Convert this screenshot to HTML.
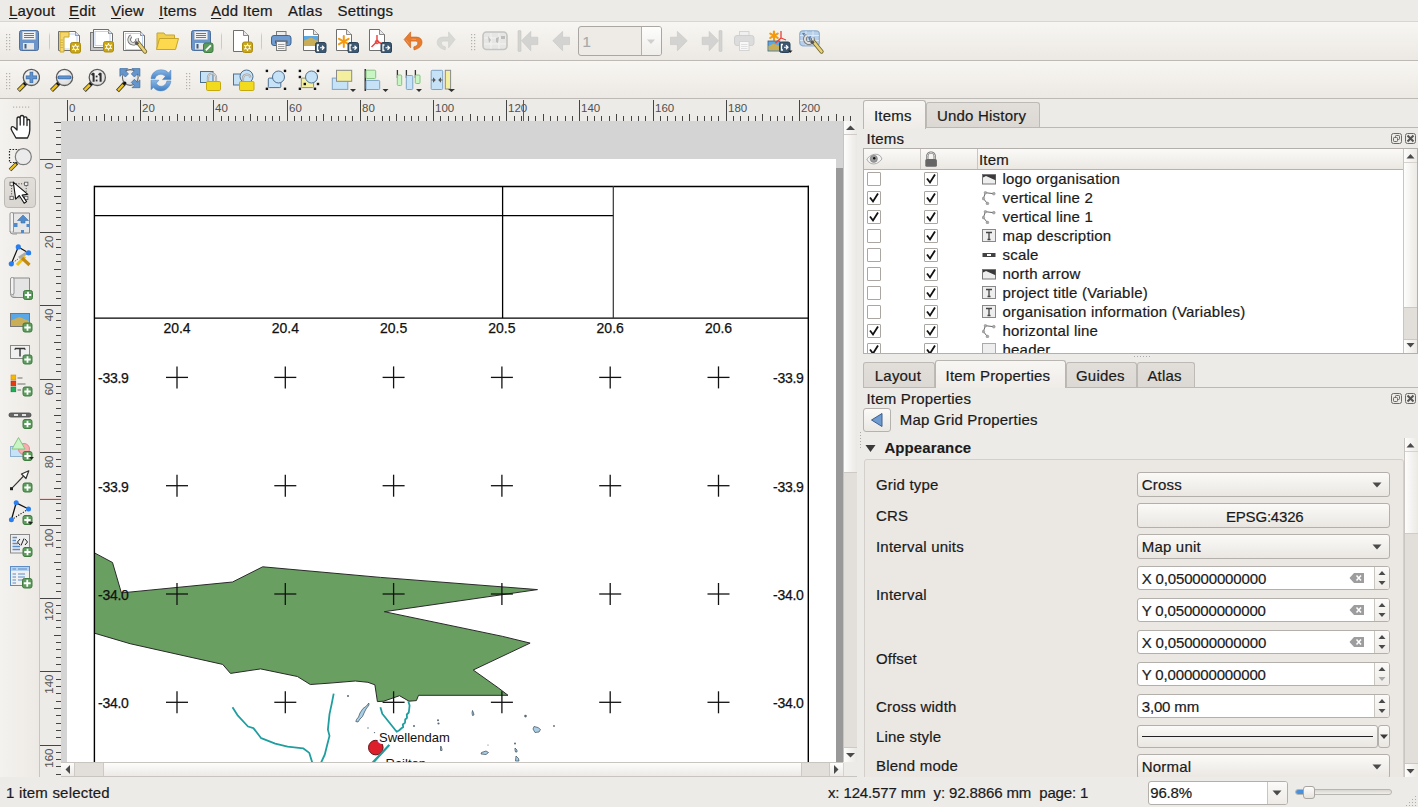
<!DOCTYPE html>
<html><head><meta charset="utf-8"><style>
html,body{margin:0;padding:0;width:1418px;height:807px;overflow:hidden;background:#edebe7;font-family:"Liberation Sans", sans-serif;}
.t{position:absolute;white-space:nowrap;line-height:normal;}
u{text-decoration:underline;text-underline-offset:2px;}
svg{overflow:hidden}
</style></head><body>
<div style="position:absolute;left:0px;top:0px;width:1418px;height:21px;background:#edebe7"></div><div style="position:absolute;left:0px;top:21px;width:1418px;height:1px;background:#d9d5d0"></div><div class="t" style="left:9px;top:2.18px;font-size:15px;color:#1a1a1a;font-weight:normal;letter-spacing:0.2px;-webkit-text-stroke:0.2px #1a1a1a;"><u>L</u>ayout</div><div class="t" style="left:69px;top:2.18px;font-size:15px;color:#1a1a1a;font-weight:normal;letter-spacing:0.2px;-webkit-text-stroke:0.2px #1a1a1a;"><u>E</u>dit</div><div class="t" style="left:111px;top:2.18px;font-size:15px;color:#1a1a1a;font-weight:normal;letter-spacing:0.2px;-webkit-text-stroke:0.2px #1a1a1a;"><u>V</u>iew</div><div class="t" style="left:159px;top:2.18px;font-size:15px;color:#1a1a1a;font-weight:normal;letter-spacing:0.2px;-webkit-text-stroke:0.2px #1a1a1a;"><u>I</u>tems</div><div class="t" style="left:211px;top:2.18px;font-size:15px;color:#1a1a1a;font-weight:normal;letter-spacing:0.2px;-webkit-text-stroke:0.2px #1a1a1a;"><u>A</u>dd Item</div><div class="t" style="left:288px;top:2.18px;font-size:15px;color:#1a1a1a;font-weight:normal;letter-spacing:0.2px;-webkit-text-stroke:0.2px #1a1a1a;">Atlas</div><div class="t" style="left:337.5px;top:2.18px;font-size:15px;color:#1a1a1a;font-weight:normal;letter-spacing:0.2px;-webkit-text-stroke:0.2px #1a1a1a;">Settings</div><div style="position:absolute;left:0px;top:22px;width:1418px;height:38px;background:linear-gradient(#f8f6f2,#ece9e4)"></div><div style="position:absolute;left:0px;top:60px;width:1418px;height:1px;background:#bdb9b4"></div><div style="position:absolute;left:0px;top:61px;width:1418px;height:37px;background:linear-gradient(#f8f6f2,#ece9e4)"></div><div style="position:absolute;left:0px;top:98px;width:1418px;height:1px;background:#bdb9b4"></div><svg style="position:absolute;left:5.5px;top:33px;" width="6" height="19" viewBox="0 0 6 19"><rect x="0" y="1" width="1.2" height="1.2" fill="#b4b0ab"/><rect x="3" y="1" width="1.2" height="1.2" fill="#b4b0ab"/><rect x="0" y="4" width="1.2" height="1.2" fill="#b4b0ab"/><rect x="3" y="4" width="1.2" height="1.2" fill="#b4b0ab"/><rect x="0" y="7" width="1.2" height="1.2" fill="#b4b0ab"/><rect x="3" y="7" width="1.2" height="1.2" fill="#b4b0ab"/><rect x="0" y="10" width="1.2" height="1.2" fill="#b4b0ab"/><rect x="3" y="10" width="1.2" height="1.2" fill="#b4b0ab"/><rect x="0" y="13" width="1.2" height="1.2" fill="#b4b0ab"/><rect x="3" y="13" width="1.2" height="1.2" fill="#b4b0ab"/><rect x="0" y="16" width="1.2" height="1.2" fill="#b4b0ab"/><rect x="3" y="16" width="1.2" height="1.2" fill="#b4b0ab"/></svg><svg style="position:absolute;left:19px;top:30px;" width="21" height="22" viewBox="0 0 21 22"><rect x="0.5" y="0.5" width="19" height="20" rx="2" fill="#6b95c8" stroke="#4c6f9c"/><rect x="3.5" y="1.5" width="13" height="8" fill="#f2f2f2" stroke="#c8c8c8" stroke-width="0.5"/><path d="M5 3.5 H15 M5 5.5 H15 M5 7.5 H15" stroke="#555" stroke-width="0.8"/><rect x="4" y="13" width="11" height="6.5" fill="#e6e6e6"/><rect x="5.5" y="14" width="2" height="4.5" fill="#3d5e87"/></svg><div style="position:absolute;left:49px;top:32px;width:1px;height:19px;background:linear-gradient(rgba(200,196,191,0),#cdc9c4 20%,#cdc9c4 80%,rgba(200,196,191,0))"></div><svg style="position:absolute;left:58px;top:31px;" width="24" height="23" viewBox="0 0 24 23"><path d="M0.5 0.5 H17.5 L21.5 4.5 V19.5 H0.5 Z" fill="#fff" stroke="#6f6f6f" stroke-width="1"/><path d="M17.5 0.5 V4.5 H21.5" fill="#e8e8e8" stroke="#6f6f6f" stroke-width="0.8"/><rect x="2" y="3" width="17" height="15" fill="none" stroke="#b0c8f0" stroke-width="0.8"/><path d="M2 1 H11 V6 H6 V21 H2 Z" fill="#f5d76e" stroke="#c9a82a" stroke-width="1"/><path d="M2.5 9 H5 M2.5 11.5 H5 M2.5 14 H5 M2.5 16.5 H5" stroke="#c9a82a" stroke-width="0.7"/><rect x="12.5" y="11.5" width="10" height="10.5" rx="2" fill="#c9a616" stroke="#ad8c10" stroke-width="1"/><g stroke="#fff" stroke-width="1.2"><line x1="17.5" y1="13" x2="17.5" y2="20.5"/><line x1="14.2" y1="14.8" x2="20.8" y2="18.7"/><line x1="20.8" y1="14.8" x2="14.2" y2="18.7"/></g><circle cx="17.5" cy="16.75" r="2" fill="#c9a616" stroke="#fff" stroke-width="1"/></svg><svg style="position:absolute;left:90px;top:29px;" width="25" height="24" viewBox="0 0 25 24"><rect x="0.5" y="3.5" width="18" height="18" fill="#c8c8c8" stroke="#7a7a7a"/><path d="M3.5 0.5 H18.5 L22.5 4.5 V18.5 H3.5 Z" fill="#fff" stroke="#6f6f6f" stroke-width="1"/><path d="M18.5 0.5 V4.5 H22.5" fill="#e8e8e8" stroke="#6f6f6f" stroke-width="0.8"/><rect x="5" y="2.5" width="15" height="14" fill="none" stroke="#b0c8f0" stroke-width="0.8"/><rect x="13.5" y="12.5" width="10" height="10.5" rx="2" fill="#c9a616" stroke="#ad8c10" stroke-width="1"/><g stroke="#fff" stroke-width="1.2"><line x1="18.5" y1="14" x2="18.5" y2="21.5"/><line x1="15.2" y1="15.8" x2="21.8" y2="19.7"/><line x1="21.8" y1="15.8" x2="15.2" y2="19.7"/></g><circle cx="18.5" cy="17.75" r="2" fill="#c9a616" stroke="#fff" stroke-width="1"/></svg><svg style="position:absolute;left:123px;top:31px;" width="25" height="23" viewBox="0 0 25 23"><path d="M0.5 0.5 H17.5 L21.5 4.5 V19.5 H0.5 Z" fill="#fff" stroke="#6f6f6f" stroke-width="1"/><path d="M17.5 0.5 V4.5 H21.5" fill="#e8e8e8" stroke="#6f6f6f" stroke-width="0.8"/><rect x="2.5" y="2.5" width="17" height="16" fill="none" stroke="#b0c8f0" stroke-width="0.8"/><path d="M14.5 11 L22 20.5" stroke="#6f6228" stroke-width="4.2" stroke-linecap="round"/><path d="M14.5 11 L22 20.5" stroke="#e8d27a" stroke-width="2.6" stroke-linecap="round"/><path d="M8.3 5.2 A4 4 0 1 0 14 7.5" fill="none" stroke="#6a6a6a" stroke-width="3.6"/><path d="M8.3 5.2 A4 4 0 1 0 14 7.5" fill="none" stroke="#e0e0e0" stroke-width="2"/><path d="M12.5 11 L15 13.5" stroke="#555" stroke-width="3"/></svg><svg style="position:absolute;left:156px;top:32px;" width="24" height="19" viewBox="0 0 24 19"><path d="M1 1 H8 L9.5 3 H18.5 V17.5 H1 Z" fill="#f2cf4a" stroke="#c7a52a" stroke-width="1"/><path d="M3.5 6.5 H22.5 L19.5 17.5 H0.5 Z" fill="#fdd94e" stroke="#c7a52a" stroke-width="1"/></svg><svg style="position:absolute;left:191px;top:30px;" width="23" height="23" viewBox="0 0 23 23"><rect x="0.5" y="0.5" width="19" height="20" rx="2" fill="#6b95c8" stroke="#4c6f9c"/><rect x="3.5" y="1.5" width="13" height="8" fill="#f2f2f2" stroke="#c8c8c8" stroke-width="0.5"/><path d="M5 3.5 H15 M5 5.5 H15 M5 7.5 H15" stroke="#555" stroke-width="0.8"/><rect x="4" y="13" width="11" height="6.5" fill="#e6e6e6"/><rect x="5.5" y="14" width="2" height="4.5" fill="#3d5e87"/><rect x="12.5" y="13" width="9.5" height="9.5" rx="2" fill="#5a9a5a" stroke="#3f7a3f"/><path d="M14.8 20.3 L19.8 15.3" stroke="#fff" stroke-width="1.8"/></svg><div style="position:absolute;left:221px;top:32px;width:1px;height:19px;background:linear-gradient(rgba(200,196,191,0),#cdc9c4 20%,#cdc9c4 80%,rgba(200,196,191,0))"></div><svg style="position:absolute;left:233px;top:30px;" width="21" height="23" viewBox="0 0 21 23"><path d="M0.5 0.5 H10.5 L15.5 5.5 V21.5 H0.5 Z" fill="#fff" stroke="#6f6f6f" stroke-width="1"/><path d="M10.5 0.5 V5.5 H15.5" fill="#e8e8e8" stroke="#6f6f6f" stroke-width="0.8"/><rect x="9.5" y="12.0" width="10" height="10.5" rx="2" fill="#c9a616" stroke="#ad8c10" stroke-width="1"/><g stroke="#fff" stroke-width="1.2"><line x1="14.5" y1="13.5" x2="14.5" y2="21.0"/><line x1="11.2" y1="15.3" x2="17.8" y2="19.2"/><line x1="17.8" y1="15.3" x2="11.2" y2="19.2"/></g><circle cx="14.5" cy="17.25" r="2" fill="#c9a616" stroke="#fff" stroke-width="1"/></svg><div style="position:absolute;left:261px;top:32px;width:1px;height:19px;background:linear-gradient(rgba(200,196,191,0),#cdc9c4 20%,#cdc9c4 80%,rgba(200,196,191,0))"></div><svg style="position:absolute;left:271px;top:31px;" width="21" height="20" viewBox="0 0 21 20"><rect x="5.5" y="0.5" width="9.5" height="6" fill="#ececec" stroke="#7a7a7a"/><rect x="0.5" y="4.5" width="19.5" height="10" rx="2.5" fill="#6f9bd0" stroke="#3f648f"/><rect x="4" y="9.5" width="12.5" height="3" fill="#5a5a5a"/><rect x="5.5" y="10.5" width="9.5" height="9" fill="#f5f5f5" stroke="#7a7a7a"/><path d="M7 13.5 H13.5 M7 15.5 H13.5 M7 17.5 H13.5" stroke="#888" stroke-width="0.8"/></svg><svg style="position:absolute;left:303px;top:29px;" width="24" height="24" viewBox="0 0 24 24"><path d="M0.5 0.5 H10.5 L15.5 5.5 V21.5 H0.5 Z" fill="#fff" stroke="#6f6f6f" stroke-width="1"/><path d="M10.5 0.5 V5.5 H15.5" fill="#e8e8e8" stroke="#6f6f6f" stroke-width="0.8"/><rect x="1" y="7" width="14" height="10" fill="#5aa9e6"/><path d="M1 17 V11.5 L8 8.5 L15 12 V17 Z" fill="#c9ad57"/><rect x="12.5" y="13.5" width="10.5" height="10.5" rx="2" fill="#3d5870" stroke="#2b4257"/><path d="M16 16 H14.5 V21.5 H16" fill="none" stroke="#fff" stroke-width="1.3"/><path d="M17 18.75 H21 M19 16.8 L21 18.75 L19 20.7" fill="none" stroke="#fff" stroke-width="1.2"/></svg><svg style="position:absolute;left:336px;top:29px;" width="24" height="24" viewBox="0 0 24 24"><path d="M0.5 0.5 H10.5 L15.5 5.5 V21.5 H0.5 Z" fill="#fff" stroke="#6f6f6f" stroke-width="1"/><path d="M10.5 0.5 V5.5 H15.5" fill="#e8e8e8" stroke="#6f6f6f" stroke-width="0.8"/><g stroke="#f39a10" stroke-width="2" stroke-linecap="round"><line x1="7.8" y1="7" x2="7.8" y2="18"/><line x1="3" y1="9.8" x2="12.6" y2="15.2"/><line x1="12.6" y1="9.8" x2="3" y2="15.2"/></g><rect x="12.0" y="13.5" width="10.5" height="10.5" rx="2" fill="#3d5870" stroke="#2b4257"/><path d="M15.5 16 H14.0 V21.5 H15.5" fill="none" stroke="#fff" stroke-width="1.3"/><path d="M16.5 18.75 H20.5 M18.5 16.8 L20.5 18.75 L18.5 20.7" fill="none" stroke="#fff" stroke-width="1.2"/></svg><svg style="position:absolute;left:369px;top:29px;" width="24" height="24" viewBox="0 0 24 24"><path d="M0.5 0.5 H10.5 L15.5 5.5 V21.5 H0.5 Z" fill="#fff" stroke="#6f6f6f" stroke-width="1"/><path d="M10.5 0.5 V5.5 H15.5" fill="#e8e8e8" stroke="#6f6f6f" stroke-width="0.8"/><path d="M8 6 V12.5 M8 12.5 L2.5 18 M8 12.5 L13.5 15" stroke="#e8403a" stroke-width="1.4" fill="none"/><circle cx="8" cy="13" r="1.8" fill="none" stroke="#e8403a" stroke-width="1"/><rect x="12.0" y="13.5" width="10.5" height="10.5" rx="2" fill="#3d5870" stroke="#2b4257"/><path d="M15.5 16 H14.0 V21.5 H15.5" fill="none" stroke="#fff" stroke-width="1.3"/><path d="M16.5 18.75 H20.5 M18.5 16.8 L20.5 18.75 L18.5 20.7" fill="none" stroke="#fff" stroke-width="1.2"/></svg><svg style="position:absolute;left:403px;top:31px;" width="21" height="21" viewBox="0 0 21 21"><path d="M1.1 8.5 L7.6 0.9 V6.1 H13.5 C17 6.1 19 8.5 19 11.2 C19 14.5 16.5 17.5 11 18.9 L10.8 15.9 C13.3 15.2 14.8 13.8 14.8 12.2 C14.8 10.9 13.8 10.1 12.5 10.1 H7.6 V16.8 Z" fill="#e77b2e" stroke="#cf661f" stroke-width="0.7" stroke-linejoin="round"/><path d="M2.8 8.8 L6.2 12.6 M8.5 8.3 H13" stroke="#f3b07a" stroke-width="0.6"/></svg><svg style="position:absolute;left:436px;top:31px;" width="21" height="21" viewBox="0 0 21 21"><g transform="translate(20.2,0) scale(-1,1)"><path d="M1.1 8.5 L7.6 0.9 V6.1 H13.5 C17 6.1 19 8.5 19 11.2 C19 14.5 16.5 17.5 11 18.9 L10.8 15.9 C13.3 15.2 14.8 13.8 14.8 12.2 C14.8 10.9 13.8 10.1 12.5 10.1 H7.6 V16.8 Z" fill="#d8d9d5" stroke="#d0d1cd" stroke-width="0.7" stroke-linejoin="round"/></g></svg><svg style="position:absolute;left:471px;top:33px;" width="6" height="19" viewBox="0 0 6 19"><rect x="0" y="1" width="1.2" height="1.2" fill="#b4b0ab"/><rect x="3" y="1" width="1.2" height="1.2" fill="#b4b0ab"/><rect x="0" y="4" width="1.2" height="1.2" fill="#b4b0ab"/><rect x="3" y="4" width="1.2" height="1.2" fill="#b4b0ab"/><rect x="0" y="7" width="1.2" height="1.2" fill="#b4b0ab"/><rect x="3" y="7" width="1.2" height="1.2" fill="#b4b0ab"/><rect x="0" y="10" width="1.2" height="1.2" fill="#b4b0ab"/><rect x="3" y="10" width="1.2" height="1.2" fill="#b4b0ab"/><rect x="0" y="13" width="1.2" height="1.2" fill="#b4b0ab"/><rect x="3" y="13" width="1.2" height="1.2" fill="#b4b0ab"/><rect x="0" y="16" width="1.2" height="1.2" fill="#b4b0ab"/><rect x="3" y="16" width="1.2" height="1.2" fill="#b4b0ab"/></svg><svg style="position:absolute;left:482px;top:31px;" width="26" height="20" viewBox="0 0 26 20"><rect x="1" y="1" width="24" height="17.5" rx="3.5" fill="#e6e6e4" stroke="#c4c4c2" stroke-width="1.6"/><path d="M9 2 V18 M17 2 V18 M2 7 H24 M2 13 H24" stroke="#f6f6f6" stroke-width="0.8"/><path d="M6 5 L9 9 L7 12 Z M14 7 L17 6 L16 12 L14 11 Z M19 5 H23 V8 H19 Z" fill="#bdbdbb"/></svg><svg style="position:absolute;left:517px;top:30px;" width="22" height="22" viewBox="0 0 22 22"><rect x="1" y="0.5" width="3" height="21" rx="1" fill="#d3d3d1" stroke="#c6c6c4" stroke-width="0.6"/><path d="M4.5 10.7 L13.8 1.4 V7.2 H20.8 V14.6 H13.8 V20.8 Z" fill="#d3d3d1" stroke="#c6c6c4" stroke-width="0.6"/></svg><svg style="position:absolute;left:552px;top:30px;" width="18" height="22" viewBox="0 0 18 22"><path d="M0.8 10.7 L10.6 1.4 V7.2 H17.5 V14.6 H10.6 V20.8 Z" fill="#d3d3d1" stroke="#c6c6c4" stroke-width="0.6"/></svg><div style="position:absolute;left:578px;top:26px;width:84px;height:30px;background:#eeebe7;border:1px solid #aaa6a1;border-radius:3px;box-sizing:border-box"></div><div style="position:absolute;left:641px;top:27px;width:20px;height:28px;background:linear-gradient(#fdfdfc,#f0eeea);border-left:1px solid #b3afaa;border-radius:0 2px 2px 0;box-sizing:border-box"></div><svg style="position:absolute;left:646px;top:39px;" width="10" height="6" viewBox="0 0 10 6"><path d="M1 0.5 L9 0.5 L5 5 Z" fill="#cfcfcd"/></svg><div class="t" style="left:582.5px;top:32.98px;font-size:15px;color:#a8a8a8;font-weight:normal;letter-spacing:0.2px;-webkit-text-stroke:0.2px #a8a8a8;">1</div><svg style="position:absolute;left:670px;top:30px;" width="18" height="22" viewBox="0 0 18 22"><path d="M17.2 10.7 L7.4 1.4 V7.2 H0.5 V14.6 H7.4 V20.8 Z" fill="#d3d3d1" stroke="#c6c6c4" stroke-width="0.6"/></svg><svg style="position:absolute;left:701px;top:30px;" width="22" height="22" viewBox="0 0 22 22"><rect x="18" y="0.5" width="3" height="21" rx="1" fill="#d3d3d1" stroke="#c6c6c4" stroke-width="0.6"/><path d="M17.5 10.7 L8.2 1.4 V7.2 H1.2 V14.6 H8.2 V20.8 Z" fill="#d3d3d1" stroke="#c6c6c4" stroke-width="0.6"/></svg><svg style="position:absolute;left:734px;top:31px;" width="21" height="20" viewBox="0 0 21 20"><rect x="5.5" y="0.5" width="9.5" height="6" fill="#f0f0f0" stroke="#d4d4d4"/><rect x="0.5" y="4.5" width="19.5" height="10" rx="2.5" fill="#dcdcdc" stroke="#cfcfcf"/><rect x="5.5" y="10.5" width="9.5" height="9" fill="#f8f8f8" stroke="#d4d4d4"/><path d="M7 13.5 H13.5 M7 15.5 H13.5 M7 17.5 H13.5" stroke="#d8d8d8" stroke-width="0.8"/></svg><svg style="position:absolute;left:767px;top:30px;" width="26" height="24" viewBox="0 0 26 24"><g stroke="#f39a10" stroke-width="2.2" stroke-linecap="round"><line x1="7" y1="1.5" x2="7" y2="10"/><line x1="3.3" y1="3.6" x2="10.7" y2="7.9"/><line x1="10.7" y1="3.6" x2="3.3" y2="7.9"/></g><rect x="1" y="11" width="12" height="10" fill="#5aa9e6" stroke="#3c5c7c" stroke-width="0.8"/><path d="M1.4 20.6 V16 L6.5 13.5 L12.6 16 V20.6 Z" fill="#c9ad57"/><path d="M14 1 V8 M14 8 L8.5 13 M14 8 L19 10" stroke="#e8403a" stroke-width="1.3" fill="none"/><rect x="12.5" y="12.0" width="10.5" height="10.5" rx="2" fill="#3d5870" stroke="#2b4257"/><path d="M16 14.5 H14.5 V20.0 H16" fill="none" stroke="#fff" stroke-width="1.3"/><path d="M17 17.25 H21 M19 15.3 L21 17.25 L19 19.2" fill="none" stroke="#fff" stroke-width="1.2"/><path d="M21 20.5 H25.5 L23.2 23 Z" fill="#222"/></svg><svg style="position:absolute;left:799px;top:30px;" width="25" height="24" viewBox="0 0 25 24"><rect x="0.8" y="0.8" width="19.5" height="15" rx="3" fill="#b9d0ea" stroke="#8eaed0" stroke-width="1.2"/><path d="M7 1 V15.5 M14 1 V15.5 M1 5.5 H20 M1 10.5 H20" stroke="#e4eef8" stroke-width="0.8"/><path d="M3 3 H6 L5 6 Z M9 7 L12 6 L11 12 Z" fill="#5d7fa5"/><path d="M14 11 L22.5 21.5" stroke="#6f6228" stroke-width="4.2" stroke-linecap="round"/><path d="M14 11 L22.5 21.5" stroke="#e8d27a" stroke-width="2.6" stroke-linecap="round"/><path d="M8 5.5 A4 4 0 1 0 13.7 7.8" fill="none" stroke="#6a6a6a" stroke-width="3.6"/><path d="M8 5.5 A4 4 0 1 0 13.7 7.8" fill="none" stroke="#e0e0e0" stroke-width="2"/><path d="M12 11 L14.5 13.5" stroke="#555" stroke-width="3"/></svg><svg style="position:absolute;left:5.5px;top:72px;" width="6" height="19" viewBox="0 0 6 19"><rect x="0" y="1" width="1.2" height="1.2" fill="#b4b0ab"/><rect x="3" y="1" width="1.2" height="1.2" fill="#b4b0ab"/><rect x="0" y="4" width="1.2" height="1.2" fill="#b4b0ab"/><rect x="3" y="4" width="1.2" height="1.2" fill="#b4b0ab"/><rect x="0" y="7" width="1.2" height="1.2" fill="#b4b0ab"/><rect x="3" y="7" width="1.2" height="1.2" fill="#b4b0ab"/><rect x="0" y="10" width="1.2" height="1.2" fill="#b4b0ab"/><rect x="3" y="10" width="1.2" height="1.2" fill="#b4b0ab"/><rect x="0" y="13" width="1.2" height="1.2" fill="#b4b0ab"/><rect x="3" y="13" width="1.2" height="1.2" fill="#b4b0ab"/><rect x="0" y="16" width="1.2" height="1.2" fill="#b4b0ab"/><rect x="3" y="16" width="1.2" height="1.2" fill="#b4b0ab"/></svg><svg style="position:absolute;left:0px;top:61px;" width="40" height="38" viewBox="0 0 40 38"><path d="M25.9 21.9 L18.4 29.4" stroke="#333" stroke-width="4.2" stroke-linecap="butt"/><path d="M23.9 23.9 L18.7 29.099999999999998" stroke="#f0c419" stroke-width="2.6"/><circle cx="25.4" cy="22.4" r="1.7" fill="#111"/><defs><radialGradient id="mg" cx="0.4" cy="0.35" r="0.7"><stop offset="0" stop-color="#fafafa"/><stop offset="1" stop-color="#d8d8d8"/></radialGradient></defs><circle cx="31.4" cy="16.4" r="8.1" fill="url(#mg)" stroke="#5a5a5a" stroke-width="1.3"/><path d="M31.4 10.8 V22 M25.8 16.4 H37" stroke="#3f6fa8" stroke-width="3.6"/><path d="M31.4 11.4 V21.4 M26.4 16.4 H36.4" stroke="#5f93cf" stroke-width="2.2"/></svg><svg style="position:absolute;left:40px;top:61px;" width="40" height="38" viewBox="0 0 40 38"><path d="M19.0 21.9 L11.5 29.4" stroke="#333" stroke-width="4.2" stroke-linecap="butt"/><path d="M17.0 23.9 L11.8 29.099999999999998" stroke="#f0c419" stroke-width="2.6"/><circle cx="18.5" cy="22.4" r="1.7" fill="#111"/><defs><radialGradient id="mg" cx="0.4" cy="0.35" r="0.7"><stop offset="0" stop-color="#fafafa"/><stop offset="1" stop-color="#d8d8d8"/></radialGradient></defs><circle cx="24.5" cy="16.4" r="8.1" fill="url(#mg)" stroke="#5a5a5a" stroke-width="1.3"/><path d="M19.3 16.4 H29.7" stroke="#3f6fa8" stroke-width="3.6" stroke-linecap="round"/><path d="M19.8 16.4 H29.2" stroke="#5f93cf" stroke-width="2.2" stroke-linecap="round"/></svg><svg style="position:absolute;left:70px;top:61px;" width="40" height="38" viewBox="0 0 40 38"><path d="M21.8 21.9 L14.3 29.4" stroke="#333" stroke-width="4.2" stroke-linecap="butt"/><path d="M19.8 23.9 L14.600000000000001 29.099999999999998" stroke="#f0c419" stroke-width="2.6"/><circle cx="21.3" cy="22.4" r="1.7" fill="#111"/><defs><radialGradient id="mg" cx="0.4" cy="0.35" r="0.7"><stop offset="0" stop-color="#fafafa"/><stop offset="1" stop-color="#d8d8d8"/></radialGradient></defs><circle cx="27.3" cy="16.4" r="8.1" fill="url(#mg)" stroke="#5a5a5a" stroke-width="1.3"/><path d="M21.6 14 L23.6 12.3 V20.8 M28.6 14 L30.6 12.3 V20.8" stroke="#2e2e2e" stroke-width="2" fill="none" stroke-linejoin="bevel"/><rect x="25.7" y="14.6" width="1.8" height="1.8" fill="#2e2e2e"/><rect x="25.7" y="18.6" width="1.8" height="1.8" fill="#2e2e2e"/></svg><svg style="position:absolute;left:116px;top:68px;" width="26" height="25" viewBox="0 0 26 25"><defs><radialGradient id="mg2" cx="0.4" cy="0.35" r="0.7"><stop offset="0" stop-color="#fafafa"/><stop offset="1" stop-color="#dadada"/></radialGradient></defs><path d="M8.5 15.3 L1.5 23" stroke="#333" stroke-width="4"/><path d="M7.2 16.8 L2 22.5" stroke="#f0c419" stroke-width="2.4"/><circle cx="14.3" cy="9.5" r="7.9" fill="url(#mg2)" stroke="#666" stroke-width="1.1"/><circle cx="8.8" cy="15" r="1.6" fill="#111"/><g fill="#6496cc" stroke="#3d6a9e" stroke-width="0.7" stroke-linejoin="miter"><path d="M3.9 0.6 H11.8 L9.5 2.9 L12.5 5.9 L9.4 9 L6.4 6 L3.9 8.4 Z"/><path d="M23.9 0.6 H16 L18.3 2.9 L15.3 5.9 L18.4 9 L21.4 6 L23.9 8.4 Z"/><path d="M23.9 19.7 H16 L18.3 17.4 L15.3 14.4 L18.4 11.3 L21.4 14.3 L23.9 11.9 Z"/></g></svg><svg style="position:absolute;left:150px;top:68px;" width="22" height="24" viewBox="0 0 22 24"><defs><linearGradient id="rf" x1="0" y1="0" x2="0" y2="1"><stop offset="0" stop-color="#8ab6e6"/><stop offset="1" stop-color="#3f7fc4"/></linearGradient></defs><path d="M1 10.7 C1.5 5 6 1.8 11 1.8 C14.5 1.8 17 3 18.5 5 L20.9 2.1 V11.6 H12.5 L15.3 8.6 C14 7 12.5 6.3 11 6.3 C8 6.3 5.7 8 5 10.7 Z" fill="url(#rf)" stroke="#4a82bf" stroke-width="0.5"/><path d="M20.9 13 C20.4 18.5 16 22.9 11 22.9 C7.5 22.9 5 21.5 3.5 19.5 L1 21.7 V12.2 H8.9 L6.3 15.2 C7.5 17 9 18.3 11 18.3 C14 18.3 16.4 16 16.9 13 Z" fill="url(#rf)" stroke="#4a82bf" stroke-width="0.5"/></svg><svg style="position:absolute;left:186px;top:72px;" width="6" height="19" viewBox="0 0 6 19"><rect x="0" y="1" width="1.2" height="1.2" fill="#b4b0ab"/><rect x="3" y="1" width="1.2" height="1.2" fill="#b4b0ab"/><rect x="0" y="4" width="1.2" height="1.2" fill="#b4b0ab"/><rect x="3" y="4" width="1.2" height="1.2" fill="#b4b0ab"/><rect x="0" y="7" width="1.2" height="1.2" fill="#b4b0ab"/><rect x="3" y="7" width="1.2" height="1.2" fill="#b4b0ab"/><rect x="0" y="10" width="1.2" height="1.2" fill="#b4b0ab"/><rect x="3" y="10" width="1.2" height="1.2" fill="#b4b0ab"/><rect x="0" y="13" width="1.2" height="1.2" fill="#b4b0ab"/><rect x="3" y="13" width="1.2" height="1.2" fill="#b4b0ab"/><rect x="0" y="16" width="1.2" height="1.2" fill="#b4b0ab"/><rect x="3" y="16" width="1.2" height="1.2" fill="#b4b0ab"/></svg><svg style="position:absolute;left:200px;top:71px;" width="22" height="21" viewBox="0 0 22 21"><rect x="0.5" y="0.5" width="12.5" height="11" fill="#c6e2f7" stroke="#4d6f90"/><path d="M8 11 V6.5 A4 4 0 0 1 16 6.5 V11" fill="none" stroke="#9e9e9e" stroke-width="2.2"/><path d="M8 11 V6.5 A4 4 0 0 1 16 6.5 V11" fill="none" stroke="#d8d8d8" stroke-width="1"/><rect x="6.5" y="10.5" width="14" height="9" rx="1.2" fill="#f2da1e" stroke="#c5a90e"/></svg><svg style="position:absolute;left:232px;top:69px;" width="23" height="23" viewBox="0 0 23 23"><rect x="1.5" y="5" width="8" height="11" fill="#c6e2f7" stroke="#4d6f90"/><circle cx="14.5" cy="7.5" r="6.5" fill="#c6e2f7" stroke="#4d6f90"/><path d="M11 13 V9 A3.8 3.8 0 0 1 18.5 8.5" fill="none" stroke="#9e9e9e" stroke-width="2.2"/><path d="M11 13 V9 A3.8 3.8 0 0 1 18.5 8.5" fill="none" stroke="#d8d8d8" stroke-width="1"/><rect x="7.5" y="12.5" width="14.5" height="9" rx="1.2" fill="#f2da1e" stroke="#c5a90e"/></svg><svg style="position:absolute;left:264px;top:68px;" width="24" height="24" viewBox="0 0 24 24"><rect x="4.3" y="10.1" width="12.5" height="9.5" rx="1" fill="#c6e2f7" stroke="#4d6f90"/><circle cx="14.5" cy="9" r="6" fill="#c6e2f7" stroke="#4d6f90"/><rect x="1.7" y="1.7" width="2.4" height="2.4" fill="#111"/><rect x="19.8" y="1.7" width="2.4" height="2.4" fill="#111"/><rect x="1.7" y="19.6" width="2.4" height="2.4" fill="#111"/><rect x="19.8" y="19.6" width="2.4" height="2.4" fill="#111"/></svg><svg style="position:absolute;left:297px;top:68px;" width="24" height="24" viewBox="0 0 24 24"><rect x="4.3" y="10.1" width="12.3" height="9.5" rx="1" fill="#f3ef9f" stroke="#8a8a8a"/><circle cx="14.5" cy="9" r="6" fill="#c6e2f7" stroke="#4d6f90"/><rect x="1.7" y="1.7" width="2.4" height="2.4" fill="#111"/><rect x="19.8" y="1.7" width="2.4" height="2.4" fill="#111"/><rect x="1.7" y="7.8" width="2.4" height="2.4" fill="#111"/><rect x="19.8" y="14.8" width="2.4" height="2.4" fill="#111"/><rect x="6.6" y="14.8" width="2.4" height="2.4" fill="#111"/><rect x="1.7" y="19.6" width="2.4" height="2.4" fill="#111"/><rect x="16.8" y="19.6" width="2.4" height="2.4" fill="#111"/></svg><svg style="position:absolute;left:331px;top:69px;" width="26" height="24" viewBox="0 0 26 24"><rect x="1.3" y="9.1" width="15.5" height="11.3" fill="#c6e2f7" stroke="#7ea3c4"/><rect x="5.5" y="1.3" width="15.2" height="11" fill="#f3ef9f" stroke="#8a8a8a"/><path d="M19 20 H25 L22 23 Z" fill="#333"/></svg><svg style="position:absolute;left:364px;top:68px;" width="26" height="25" viewBox="0 0 26 25"><rect x="0.5" y="1" width="1.6" height="22" fill="#333"/><rect x="2" y="2.2" width="9.7" height="8.3" rx="1" fill="#c9f5c4" stroke="#86c27f"/><rect x="2" y="12.4" width="13.7" height="9.1" rx="1" fill="#c6e2f7" stroke="#7ea3c4"/><path d="M18.5 21 H24.5 L21.5 24 Z" fill="#333"/></svg><svg style="position:absolute;left:396px;top:68px;" width="27" height="25" viewBox="0 0 27 25"><path d="M1.4 2 V10 M10.4 2 V10 M19.4 2 V10" stroke="#333" stroke-width="1.3"/><rect x="1.3" y="7" width="4.4" height="10.5" rx="1" fill="#c9f5c4" stroke="#86c27f"/><rect x="10.3" y="7.5" width="6.5" height="14" rx="1" fill="#c6e2f7" stroke="#7ea3c4"/><rect x="19.3" y="7" width="4.7" height="8.5" rx="1" fill="#c9f5c4" stroke="#86c27f"/><path d="M20 21 H26 L23 24 Z" fill="#333"/></svg><svg style="position:absolute;left:430px;top:68px;" width="26" height="25" viewBox="0 0 26 25"><rect x="1.2" y="2.3" width="11.5" height="19.2" rx="1" fill="#c6e2f7" stroke="#7ea3c4"/><path d="M5.8 12 L3 9.3 V14.7 Z M8.2 12 L11 9.3 V14.7 Z" fill="#5a5a5a"/><path d="M1.5 12 H4 M10 12 H12.5" stroke="#5a5a5a" stroke-width="1.2"/><rect x="15.3" y="2.3" width="5.3" height="18.7" fill="#f3ef9f" stroke="#8a8a8a"/><path d="M18 21 H25 L21.5 24 Z" fill="#333"/></svg><div style="position:absolute;left:0px;top:99px;width:39px;height:678px;background:linear-gradient(90deg,#f4f2ee,#edeae6)"></div><div style="position:absolute;left:39px;top:99px;width:1px;height:678px;background:#c8c4bf"></div><svg style="position:absolute;left:13px;top:106px;" width="18" height="3" viewBox="0 0 18 3"><rect x="0" y="0.5" width="1.2" height="1.2" fill="#b4b0ab"/><rect x="3" y="0.5" width="1.2" height="1.2" fill="#b4b0ab"/><rect x="6" y="0.5" width="1.2" height="1.2" fill="#b4b0ab"/><rect x="9" y="0.5" width="1.2" height="1.2" fill="#b4b0ab"/><rect x="12" y="0.5" width="1.2" height="1.2" fill="#b4b0ab"/><rect x="15" y="0.5" width="1.2" height="1.2" fill="#b4b0ab"/></svg><svg style="position:absolute;left:9px;top:114px;" width="22" height="26" viewBox="0 0 22 26"><path d="M7 24 L3 17 Q1.5 14.5 2.5 13 Q4 12 6 14 L8 16 V5 Q8 3 9.6 3 Q11.2 3 11.2 5 V11 V3.5 Q11.2 1.5 13 1.5 Q14.8 1.5 14.8 3.5 V11 V4.5 Q14.8 2.8 16.4 2.8 Q18 2.8 18 4.5 V11.5 V7 Q18 5.5 19.4 5.5 Q20.8 5.5 20.8 7 V16 Q20.8 20 18.5 24 Z" fill="#fff" stroke="#222" stroke-width="1.3" stroke-linejoin="round"/></svg><svg style="position:absolute;left:4px;top:145px;" width="30" height="28" viewBox="0 0 30 28"><rect x="5.5" y="4.5" width="11" height="13" fill="none" stroke="#222" stroke-width="1.2" stroke-dasharray="1.6 1.4"/><path d="M13 18 L6 25" stroke="#333" stroke-width="3.6"/><path d="M12 19 L6.2 24.8" stroke="#f0c419" stroke-width="2.2"/><circle cx="19.3" cy="11.7" r="8" fill="#ebebeb" stroke="#7a7a7a" stroke-width="1.2"/></svg><div style="position:absolute;left:4px;top:177px;width:32px;height:31px;background:linear-gradient(#e2dfda,#d9d5d0);border:1px solid #bdb9b4;border-radius:4px;box-sizing:border-box"></div><svg style="position:absolute;left:8px;top:180px;" width="24" height="26" viewBox="0 0 24 26"><path d="M3.6 5.5 V16.3 M18.2 5.5 V16.3 M5.3 3.8 H16.6 M5.3 17.9 H16.6" stroke="#333" stroke-width="0.9" stroke-dasharray="1 1.6"/><rect x="2" y="2.2" width="3.3" height="3.3" fill="#eee" stroke="#555" stroke-width="0.8"/><rect x="16.6" y="2.2" width="3.3" height="3.3" fill="#eee" stroke="#555" stroke-width="0.8"/><rect x="2" y="16.3" width="3.3" height="3.3" fill="#eee" stroke="#555" stroke-width="0.8"/><rect x="16.6" y="16.3" width="3.3" height="3.3" fill="#eee" stroke="#555" stroke-width="0.8"/><path d="M5.3 2.2 L7.7 19.2 L11.3 15.5 L16.2 23.2 L18.6 21.6 L14.1 15.1 L19.8 14.3 Z" fill="#fff" stroke="#111" stroke-width="1.1" stroke-linejoin="round"/></svg><svg style="position:absolute;left:9px;top:212px;" width="22" height="23" viewBox="0 0 22 23"><path d="M4 1 H20.5 V21 H4 Z" fill="#e6e6e6" stroke="#8a8a8a"/><rect x="1" y="0.5" width="3.5" height="20" rx="1.5" fill="#f2f2f2" stroke="#8a8a8a" stroke-width="0.9"/><path d="M1 19 Q1 22 4 22 H8" fill="#d0d0d0" stroke="#8a8a8a" stroke-width="0.9"/><path d="M14 3 L19.5 8.5 H16 V11 H12 V8.5 H8.5 Z" fill="#4f8acb" stroke="#3b6ea8" stroke-width="0.6"/><rect x="5" y="11" width="3.5" height="4" fill="#4f8acb"/><rect x="17.5" y="12" width="3" height="3" fill="#4f8acb"/><rect x="12" y="18" width="3" height="3" fill="#4f8acb"/></svg><svg style="position:absolute;left:7px;top:242px;" width="26" height="26" viewBox="0 0 26 26"><path d="M11.3 4.9 L4.3 21.8 M11.3 4.9 L21.6 10.9" stroke="#111" stroke-width="1.2"/><path d="M4.3 21.8 L11 17" stroke="#111" stroke-width="1" stroke-dasharray="1 1.5"/><path d="M12 16 L21 10" stroke="#aaa" stroke-width="3"/><path d="M10 23 L18 14.5" stroke="#e9c21a" stroke-width="3.2"/><path d="M15 16 L22.5 23" stroke="#c48a10" stroke-width="3.2"/><circle cx="11.3" cy="4.9" r="2.6" fill="#2a7ff0"/><circle cx="21.6" cy="10.9" r="2.6" fill="#2a7ff0"/><circle cx="4.3" cy="21.8" r="2.6" fill="#2a7ff0"/></svg><svg style="position:absolute;left:9px;top:276px;" width="24" height="25" viewBox="0 0 24 25"><path d="M4 2 H20.5 V21.5 H4 Z" fill="#e4e4e4" stroke="#8a8a8a"/><rect x="1.5" y="1.5" width="3.5" height="17" rx="1.5" fill="#f2f2f2" stroke="#8a8a8a" stroke-width="0.9"/><path d="M1.5 18 Q1.5 21.5 5 21.5 H9" fill="#d0d0d0" stroke="#8a8a8a" stroke-width="0.9"/><rect x="14.5" y="14.5" width="9" height="9" rx="2" fill="#5c9c5c" stroke="#3f7a3f"/><path d="M19.0 15.8 V22.2 M15.8 19.0 H22.2" stroke="#fff" stroke-width="1.8"/></svg><svg style="position:absolute;left:9px;top:312px;" width="24" height="21" viewBox="0 0 24 21"><rect x="1.5" y="1.5" width="19" height="13" fill="#5aa9e6" stroke="#777"/><path d="M2 14 V8.5 L10.5 5 L20 9 V14 Z" fill="#c9ad57"/><rect x="14.0" y="11.0" width="9" height="9" rx="2" fill="#5c9c5c" stroke="#3f7a3f"/><path d="M18.5 12.3 V18.7 M15.3 15.5 H21.7" stroke="#fff" stroke-width="1.8"/></svg><svg style="position:absolute;left:9px;top:344px;" width="24" height="21" viewBox="0 0 24 21"><rect x="1.5" y="1.5" width="19" height="13" fill="#f0f0f0" stroke="#888"/><path d="M6 4.5 H16 M11 4.5 V12.5" stroke="#333" stroke-width="1.4"/><path d="M6 4.5 V6 M16 4.5 V6" stroke="#333" stroke-width="1"/><rect x="14.0" y="11.0" width="9" height="9" rx="2" fill="#5c9c5c" stroke="#3f7a3f"/><path d="M18.5 12.3 V18.7 M15.3 15.5 H21.7" stroke="#fff" stroke-width="1.8"/></svg><svg style="position:absolute;left:9px;top:373px;" width="24" height="24" viewBox="0 0 24 24"><rect x="2" y="2" width="4.8" height="4.8" fill="#f5b800" stroke="#d08a00" stroke-width="0.6"/><rect x="2" y="8" width="4.8" height="4.8" fill="#e63a0f" stroke="#b02a08" stroke-width="0.6"/><rect x="2" y="14" width="4.8" height="4.8" fill="#1faa55" stroke="#127a3a" stroke-width="0.6"/><path d="M8.5 5 H13.5 M8.5 11 H16.5 M8.5 17 H12" stroke="#999" stroke-width="1.4"/><rect x="14.0" y="14.0" width="9" height="9" rx="2" fill="#5c9c5c" stroke="#3f7a3f"/><path d="M18.5 15.3 V21.7 M15.3 18.5 H21.7" stroke="#fff" stroke-width="1.8"/></svg><svg style="position:absolute;left:8px;top:411px;" width="26" height="18" viewBox="0 0 26 18"><rect x="1" y="2" width="22" height="4" rx="1.8" fill="#666" stroke="#444" stroke-width="0.8"/><rect x="6" y="3.2" width="4" height="1.6" fill="#fff"/><rect x="14" y="3.2" width="4" height="1.6" fill="#fff"/><rect x="15.0" y="8.5" width="9" height="9" rx="2" fill="#5c9c5c" stroke="#3f7a3f"/><path d="M19.5 9.8 V16.2 M16.3 13.0 H22.7" stroke="#fff" stroke-width="1.8"/></svg><svg style="position:absolute;left:9px;top:436px;" width="26" height="25" viewBox="0 0 26 25"><rect x="1.5" y="10.5" width="13" height="10" fill="#c6e2f7" stroke="#8fb0cf"/><circle cx="15" cy="13" r="5.5" fill="#f5b0b0" stroke="#e08a8a"/><path d="M9.5 1.5 L16 13 H3 Z" fill="#c9f5c4" stroke="#8ac285"/><rect x="14.0" y="15.5" width="9" height="9" rx="2" fill="#5c9c5c" stroke="#3f7a3f"/><path d="M18.5 16.8 V23.2 M15.3 20.0 H21.7" stroke="#fff" stroke-width="1.8"/><path d="M20 21 H25 L22.5 23.5 Z" fill="#222"/></svg><svg style="position:absolute;left:9px;top:469px;" width="26" height="25" viewBox="0 0 26 25"><path d="M2.5 19.7 L17 4.5" stroke="#333" stroke-width="1.1"/><path d="M19.8 1.8 L12.5 5 L17 9.5 Z" fill="#fff" stroke="#333" stroke-width="1.2" stroke-linejoin="round"/><rect x="1" y="18.2" width="3" height="3" fill="#222"/><rect x="14.0" y="14.0" width="9" height="9" rx="2" fill="#5c9c5c" stroke="#3f7a3f"/><path d="M18.5 15.3 V21.7 M15.3 18.5 H21.7" stroke="#fff" stroke-width="1.8"/></svg><svg style="position:absolute;left:8px;top:500px;" width="26" height="26" viewBox="0 0 26 26"><path d="M8.2 2.8 L3.4 19.8 M8.2 2.8 L20.5 9" stroke="#111" stroke-width="1.3"/><path d="M3.4 19.8 L20.5 9" stroke="#111" stroke-width="1.1" stroke-dasharray="1.2 1.5"/><circle cx="8.2" cy="2.8" r="2.5" fill="#2a7ff0"/><circle cx="20.5" cy="9" r="2.5" fill="#2a7ff0"/><circle cx="3.4" cy="19.8" r="2.5" fill="#2a7ff0"/><rect x="15.0" y="15.5" width="9" height="9" rx="2" fill="#5c9c5c" stroke="#3f7a3f"/><path d="M19.5 16.8 V23.2 M16.3 20.0 H22.7" stroke="#fff" stroke-width="1.8"/><path d="M20 22 H25 L22.5 24.5 Z" fill="#222"/></svg><svg style="position:absolute;left:9px;top:533px;" width="24" height="24" viewBox="0 0 24 24"><rect x="1.5" y="1.5" width="19" height="18.5" fill="#eeeeee" stroke="#8a8a8a"/><path d="M3.5 4.5 H8 M3.5 7.5 H7 M3.5 10.5 H9 M3.5 13.5 H11 M3.5 16.5 H11" stroke="#5b8cc6" stroke-width="1.5"/><path d="M11 6 L8.5 9 L11 12 M16 6 L18.5 9 L16 12 M12 12.5 L15 5.5" fill="none" stroke="#222" stroke-width="1"/><rect x="14.0" y="14.5" width="9" height="9" rx="2" fill="#5c9c5c" stroke="#3f7a3f"/><path d="M18.5 15.8 V22.2 M15.3 19.0 H21.7" stroke="#fff" stroke-width="1.8"/></svg><svg style="position:absolute;left:9px;top:565px;" width="24" height="24" viewBox="0 0 24 24"><rect x="1.5" y="1.5" width="19" height="19" fill="#f0f0f0" stroke="#5b8cc6"/><rect x="2" y="2" width="18" height="4" fill="#b7d3f0"/><path d="M3.5 4 H7 M9 4 H18 M3.5 9 H7 M9 9 H16 M3.5 12 H7 M9 12 H16 M3.5 15 H7 M9 15 H14 M3.5 18 H7" stroke="#5b8cc6" stroke-width="1.2"/><rect x="13.5" y="13.5" width="9.5" height="9.5" rx="2" fill="#5c9c5c" stroke="#3f7a3f"/><path d="M18.25 14.8 V21.7 M14.8 18.25 H21.7" stroke="#fff" stroke-width="1.8"/></svg><svg style="position:absolute;left:40px;top:99px;" width="817" height="22" viewBox="0 0 817 22"><rect width="817" height="22" fill="#edebe7"/><line x1="27.5" y1="1" x2="27.5" y2="22" stroke="#444" stroke-width="1"/><text x="29.0" y="13" font-size="11.5" fill="#505050" font-family="Liberation Sans">0</text><line x1="34.5" y1="17" x2="34.5" y2="22" stroke="#444" stroke-width="1"/><line x1="42.5" y1="17" x2="42.5" y2="22" stroke="#444" stroke-width="1"/><line x1="49.5" y1="17" x2="49.5" y2="22" stroke="#444" stroke-width="1"/><line x1="56.5" y1="17" x2="56.5" y2="22" stroke="#444" stroke-width="1"/><line x1="64.5" y1="15" x2="64.5" y2="22" stroke="#444" stroke-width="1"/><line x1="71.5" y1="17" x2="71.5" y2="22" stroke="#444" stroke-width="1"/><line x1="78.5" y1="17" x2="78.5" y2="22" stroke="#444" stroke-width="1"/><line x1="86.5" y1="17" x2="86.5" y2="22" stroke="#444" stroke-width="1"/><line x1="93.5" y1="17" x2="93.5" y2="22" stroke="#444" stroke-width="1"/><line x1="100.5" y1="1" x2="100.5" y2="22" stroke="#444" stroke-width="1"/><text x="102.0" y="13" font-size="11.5" fill="#505050" font-family="Liberation Sans">20</text><line x1="108.5" y1="17" x2="108.5" y2="22" stroke="#444" stroke-width="1"/><line x1="115.5" y1="17" x2="115.5" y2="22" stroke="#444" stroke-width="1"/><line x1="122.5" y1="17" x2="122.5" y2="22" stroke="#444" stroke-width="1"/><line x1="129.5" y1="17" x2="129.5" y2="22" stroke="#444" stroke-width="1"/><line x1="137.5" y1="15" x2="137.5" y2="22" stroke="#444" stroke-width="1"/><line x1="144.5" y1="17" x2="144.5" y2="22" stroke="#444" stroke-width="1"/><line x1="151.5" y1="17" x2="151.5" y2="22" stroke="#444" stroke-width="1"/><line x1="159.5" y1="17" x2="159.5" y2="22" stroke="#444" stroke-width="1"/><line x1="166.5" y1="17" x2="166.5" y2="22" stroke="#444" stroke-width="1"/><line x1="173.5" y1="1" x2="173.5" y2="22" stroke="#444" stroke-width="1"/><text x="175.0" y="13" font-size="11.5" fill="#505050" font-family="Liberation Sans">40</text><line x1="181.5" y1="17" x2="181.5" y2="22" stroke="#444" stroke-width="1"/><line x1="188.5" y1="17" x2="188.5" y2="22" stroke="#444" stroke-width="1"/><line x1="195.5" y1="17" x2="195.5" y2="22" stroke="#444" stroke-width="1"/><line x1="203.5" y1="17" x2="203.5" y2="22" stroke="#444" stroke-width="1"/><line x1="210.5" y1="15" x2="210.5" y2="22" stroke="#444" stroke-width="1"/><line x1="217.5" y1="17" x2="217.5" y2="22" stroke="#444" stroke-width="1"/><line x1="225.5" y1="17" x2="225.5" y2="22" stroke="#444" stroke-width="1"/><line x1="232.5" y1="17" x2="232.5" y2="22" stroke="#444" stroke-width="1"/><line x1="239.5" y1="17" x2="239.5" y2="22" stroke="#444" stroke-width="1"/><line x1="247.5" y1="1" x2="247.5" y2="22" stroke="#444" stroke-width="1"/><text x="249.0" y="13" font-size="11.5" fill="#505050" font-family="Liberation Sans">60</text><line x1="254.5" y1="17" x2="254.5" y2="22" stroke="#444" stroke-width="1"/><line x1="261.5" y1="17" x2="261.5" y2="22" stroke="#444" stroke-width="1"/><line x1="269.5" y1="17" x2="269.5" y2="22" stroke="#444" stroke-width="1"/><line x1="276.5" y1="17" x2="276.5" y2="22" stroke="#444" stroke-width="1"/><line x1="283.5" y1="15" x2="283.5" y2="22" stroke="#444" stroke-width="1"/><line x1="291.5" y1="17" x2="291.5" y2="22" stroke="#444" stroke-width="1"/><line x1="298.5" y1="17" x2="298.5" y2="22" stroke="#444" stroke-width="1"/><line x1="305.5" y1="17" x2="305.5" y2="22" stroke="#444" stroke-width="1"/><line x1="312.5" y1="17" x2="312.5" y2="22" stroke="#444" stroke-width="1"/><line x1="320.5" y1="1" x2="320.5" y2="22" stroke="#444" stroke-width="1"/><text x="322.0" y="13" font-size="11.5" fill="#505050" font-family="Liberation Sans">80</text><line x1="327.5" y1="17" x2="327.5" y2="22" stroke="#444" stroke-width="1"/><line x1="334.5" y1="17" x2="334.5" y2="22" stroke="#444" stroke-width="1"/><line x1="342.5" y1="17" x2="342.5" y2="22" stroke="#444" stroke-width="1"/><line x1="349.5" y1="17" x2="349.5" y2="22" stroke="#444" stroke-width="1"/><line x1="356.5" y1="15" x2="356.5" y2="22" stroke="#444" stroke-width="1"/><line x1="364.5" y1="17" x2="364.5" y2="22" stroke="#444" stroke-width="1"/><line x1="371.5" y1="17" x2="371.5" y2="22" stroke="#444" stroke-width="1"/><line x1="378.5" y1="17" x2="378.5" y2="22" stroke="#444" stroke-width="1"/><line x1="386.5" y1="17" x2="386.5" y2="22" stroke="#444" stroke-width="1"/><line x1="393.5" y1="1" x2="393.5" y2="22" stroke="#444" stroke-width="1"/><text x="395.0" y="13" font-size="11.5" fill="#505050" font-family="Liberation Sans">100</text><line x1="400.5" y1="17" x2="400.5" y2="22" stroke="#444" stroke-width="1"/><line x1="408.5" y1="17" x2="408.5" y2="22" stroke="#444" stroke-width="1"/><line x1="415.5" y1="17" x2="415.5" y2="22" stroke="#444" stroke-width="1"/><line x1="422.5" y1="17" x2="422.5" y2="22" stroke="#444" stroke-width="1"/><line x1="430.5" y1="15" x2="430.5" y2="22" stroke="#444" stroke-width="1"/><line x1="437.5" y1="17" x2="437.5" y2="22" stroke="#444" stroke-width="1"/><line x1="444.5" y1="17" x2="444.5" y2="22" stroke="#444" stroke-width="1"/><line x1="452.5" y1="17" x2="452.5" y2="22" stroke="#444" stroke-width="1"/><line x1="459.5" y1="17" x2="459.5" y2="22" stroke="#444" stroke-width="1"/><line x1="466.5" y1="1" x2="466.5" y2="22" stroke="#444" stroke-width="1"/><text x="468.0" y="13" font-size="11.5" fill="#505050" font-family="Liberation Sans">120</text><line x1="474.5" y1="17" x2="474.5" y2="22" stroke="#444" stroke-width="1"/><line x1="481.5" y1="17" x2="481.5" y2="22" stroke="#444" stroke-width="1"/><line x1="488.5" y1="17" x2="488.5" y2="22" stroke="#444" stroke-width="1"/><line x1="495.5" y1="17" x2="495.5" y2="22" stroke="#444" stroke-width="1"/><line x1="503.5" y1="15" x2="503.5" y2="22" stroke="#444" stroke-width="1"/><line x1="510.5" y1="17" x2="510.5" y2="22" stroke="#444" stroke-width="1"/><line x1="517.5" y1="17" x2="517.5" y2="22" stroke="#444" stroke-width="1"/><line x1="525.5" y1="17" x2="525.5" y2="22" stroke="#444" stroke-width="1"/><line x1="532.5" y1="17" x2="532.5" y2="22" stroke="#444" stroke-width="1"/><line x1="539.5" y1="1" x2="539.5" y2="22" stroke="#444" stroke-width="1"/><text x="541.0" y="13" font-size="11.5" fill="#505050" font-family="Liberation Sans">140</text><line x1="547.5" y1="17" x2="547.5" y2="22" stroke="#444" stroke-width="1"/><line x1="554.5" y1="17" x2="554.5" y2="22" stroke="#444" stroke-width="1"/><line x1="561.5" y1="17" x2="561.5" y2="22" stroke="#444" stroke-width="1"/><line x1="569.5" y1="17" x2="569.5" y2="22" stroke="#444" stroke-width="1"/><line x1="576.5" y1="15" x2="576.5" y2="22" stroke="#444" stroke-width="1"/><line x1="583.5" y1="17" x2="583.5" y2="22" stroke="#444" stroke-width="1"/><line x1="591.5" y1="17" x2="591.5" y2="22" stroke="#444" stroke-width="1"/><line x1="598.5" y1="17" x2="598.5" y2="22" stroke="#444" stroke-width="1"/><line x1="605.5" y1="17" x2="605.5" y2="22" stroke="#444" stroke-width="1"/><line x1="613.5" y1="1" x2="613.5" y2="22" stroke="#444" stroke-width="1"/><text x="615.0" y="13" font-size="11.5" fill="#505050" font-family="Liberation Sans">160</text><line x1="620.5" y1="17" x2="620.5" y2="22" stroke="#444" stroke-width="1"/><line x1="627.5" y1="17" x2="627.5" y2="22" stroke="#444" stroke-width="1"/><line x1="635.5" y1="17" x2="635.5" y2="22" stroke="#444" stroke-width="1"/><line x1="642.5" y1="17" x2="642.5" y2="22" stroke="#444" stroke-width="1"/><line x1="649.5" y1="15" x2="649.5" y2="22" stroke="#444" stroke-width="1"/><line x1="657.5" y1="17" x2="657.5" y2="22" stroke="#444" stroke-width="1"/><line x1="664.5" y1="17" x2="664.5" y2="22" stroke="#444" stroke-width="1"/><line x1="671.5" y1="17" x2="671.5" y2="22" stroke="#444" stroke-width="1"/><line x1="678.5" y1="17" x2="678.5" y2="22" stroke="#444" stroke-width="1"/><line x1="686.5" y1="1" x2="686.5" y2="22" stroke="#444" stroke-width="1"/><text x="688.0" y="13" font-size="11.5" fill="#505050" font-family="Liberation Sans">180</text><line x1="693.5" y1="17" x2="693.5" y2="22" stroke="#444" stroke-width="1"/><line x1="700.5" y1="17" x2="700.5" y2="22" stroke="#444" stroke-width="1"/><line x1="708.5" y1="17" x2="708.5" y2="22" stroke="#444" stroke-width="1"/><line x1="715.5" y1="17" x2="715.5" y2="22" stroke="#444" stroke-width="1"/><line x1="722.5" y1="15" x2="722.5" y2="22" stroke="#444" stroke-width="1"/><line x1="730.5" y1="17" x2="730.5" y2="22" stroke="#444" stroke-width="1"/><line x1="737.5" y1="17" x2="737.5" y2="22" stroke="#444" stroke-width="1"/><line x1="744.5" y1="17" x2="744.5" y2="22" stroke="#444" stroke-width="1"/><line x1="752.5" y1="17" x2="752.5" y2="22" stroke="#444" stroke-width="1"/><line x1="759.5" y1="1" x2="759.5" y2="22" stroke="#444" stroke-width="1"/><text x="761.0" y="13" font-size="11.5" fill="#505050" font-family="Liberation Sans">200</text><line x1="766.5" y1="17" x2="766.5" y2="22" stroke="#444" stroke-width="1"/><line x1="774.5" y1="17" x2="774.5" y2="22" stroke="#444" stroke-width="1"/><line x1="781.5" y1="17" x2="781.5" y2="22" stroke="#444" stroke-width="1"/><line x1="788.5" y1="17" x2="788.5" y2="22" stroke="#444" stroke-width="1"/><line x1="796.5" y1="15" x2="796.5" y2="22" stroke="#444" stroke-width="1"/><line x1="803.5" y1="17" x2="803.5" y2="22" stroke="#444" stroke-width="1"/><line x1="810.5" y1="17" x2="810.5" y2="22" stroke="#444" stroke-width="1"/><line x1="483.5" y1="1" x2="483.5" y2="22" stroke="#e02020" stroke-width="1"/></svg><svg style="position:absolute;left:40px;top:121px;" width="21" height="656" viewBox="0 0 21 656"><rect width="21" height="656" fill="#edebe7"/><line x1="14" y1="1.5" x2="21" y2="1.5" stroke="#444" stroke-width="1"/><line x1="16" y1="9.5" x2="21" y2="9.5" stroke="#444" stroke-width="1"/><line x1="16" y1="16.5" x2="21" y2="16.5" stroke="#444" stroke-width="1"/><line x1="16" y1="23.5" x2="21" y2="23.5" stroke="#444" stroke-width="1"/><line x1="16" y1="31.5" x2="21" y2="31.5" stroke="#444" stroke-width="1"/><line x1="0" y1="38.5" x2="21" y2="38.5" stroke="#444" stroke-width="1"/><text transform="translate(13,41.5) rotate(-90)" text-anchor="end" font-size="11.5" fill="#505050" font-family="Liberation Sans">0</text><line x1="16" y1="45.5" x2="21" y2="45.5" stroke="#444" stroke-width="1"/><line x1="16" y1="53.5" x2="21" y2="53.5" stroke="#444" stroke-width="1"/><line x1="16" y1="60.5" x2="21" y2="60.5" stroke="#444" stroke-width="1"/><line x1="16" y1="67.5" x2="21" y2="67.5" stroke="#444" stroke-width="1"/><line x1="14" y1="75.5" x2="21" y2="75.5" stroke="#444" stroke-width="1"/><line x1="16" y1="82.5" x2="21" y2="82.5" stroke="#444" stroke-width="1"/><line x1="16" y1="89.5" x2="21" y2="89.5" stroke="#444" stroke-width="1"/><line x1="16" y1="96.5" x2="21" y2="96.5" stroke="#444" stroke-width="1"/><line x1="16" y1="104.5" x2="21" y2="104.5" stroke="#444" stroke-width="1"/><line x1="0" y1="111.5" x2="21" y2="111.5" stroke="#444" stroke-width="1"/><text transform="translate(13,114.5) rotate(-90)" text-anchor="end" font-size="11.5" fill="#505050" font-family="Liberation Sans">20</text><line x1="16" y1="118.5" x2="21" y2="118.5" stroke="#444" stroke-width="1"/><line x1="16" y1="126.5" x2="21" y2="126.5" stroke="#444" stroke-width="1"/><line x1="16" y1="133.5" x2="21" y2="133.5" stroke="#444" stroke-width="1"/><line x1="16" y1="140.5" x2="21" y2="140.5" stroke="#444" stroke-width="1"/><line x1="14" y1="148.5" x2="21" y2="148.5" stroke="#444" stroke-width="1"/><line x1="16" y1="155.5" x2="21" y2="155.5" stroke="#444" stroke-width="1"/><line x1="16" y1="162.5" x2="21" y2="162.5" stroke="#444" stroke-width="1"/><line x1="16" y1="170.5" x2="21" y2="170.5" stroke="#444" stroke-width="1"/><line x1="16" y1="177.5" x2="21" y2="177.5" stroke="#444" stroke-width="1"/><line x1="0" y1="184.5" x2="21" y2="184.5" stroke="#444" stroke-width="1"/><text transform="translate(13,187.5) rotate(-90)" text-anchor="end" font-size="11.5" fill="#505050" font-family="Liberation Sans">40</text><line x1="16" y1="192.5" x2="21" y2="192.5" stroke="#444" stroke-width="1"/><line x1="16" y1="199.5" x2="21" y2="199.5" stroke="#444" stroke-width="1"/><line x1="16" y1="206.5" x2="21" y2="206.5" stroke="#444" stroke-width="1"/><line x1="16" y1="214.5" x2="21" y2="214.5" stroke="#444" stroke-width="1"/><line x1="14" y1="221.5" x2="21" y2="221.5" stroke="#444" stroke-width="1"/><line x1="16" y1="228.5" x2="21" y2="228.5" stroke="#444" stroke-width="1"/><line x1="16" y1="236.5" x2="21" y2="236.5" stroke="#444" stroke-width="1"/><line x1="16" y1="243.5" x2="21" y2="243.5" stroke="#444" stroke-width="1"/><line x1="16" y1="250.5" x2="21" y2="250.5" stroke="#444" stroke-width="1"/><line x1="0" y1="258.5" x2="21" y2="258.5" stroke="#444" stroke-width="1"/><text transform="translate(13,261.5) rotate(-90)" text-anchor="end" font-size="11.5" fill="#505050" font-family="Liberation Sans">60</text><line x1="16" y1="265.5" x2="21" y2="265.5" stroke="#444" stroke-width="1"/><line x1="16" y1="272.5" x2="21" y2="272.5" stroke="#444" stroke-width="1"/><line x1="16" y1="279.5" x2="21" y2="279.5" stroke="#444" stroke-width="1"/><line x1="16" y1="287.5" x2="21" y2="287.5" stroke="#444" stroke-width="1"/><line x1="14" y1="294.5" x2="21" y2="294.5" stroke="#444" stroke-width="1"/><line x1="16" y1="301.5" x2="21" y2="301.5" stroke="#444" stroke-width="1"/><line x1="16" y1="309.5" x2="21" y2="309.5" stroke="#444" stroke-width="1"/><line x1="16" y1="316.5" x2="21" y2="316.5" stroke="#444" stroke-width="1"/><line x1="16" y1="323.5" x2="21" y2="323.5" stroke="#444" stroke-width="1"/><line x1="0" y1="331.5" x2="21" y2="331.5" stroke="#444" stroke-width="1"/><text transform="translate(13,334.5) rotate(-90)" text-anchor="end" font-size="11.5" fill="#505050" font-family="Liberation Sans">80</text><line x1="16" y1="338.5" x2="21" y2="338.5" stroke="#444" stroke-width="1"/><line x1="16" y1="345.5" x2="21" y2="345.5" stroke="#444" stroke-width="1"/><line x1="16" y1="353.5" x2="21" y2="353.5" stroke="#444" stroke-width="1"/><line x1="16" y1="360.5" x2="21" y2="360.5" stroke="#444" stroke-width="1"/><line x1="14" y1="367.5" x2="21" y2="367.5" stroke="#444" stroke-width="1"/><line x1="16" y1="375.5" x2="21" y2="375.5" stroke="#444" stroke-width="1"/><line x1="16" y1="382.5" x2="21" y2="382.5" stroke="#444" stroke-width="1"/><line x1="16" y1="389.5" x2="21" y2="389.5" stroke="#444" stroke-width="1"/><line x1="16" y1="397.5" x2="21" y2="397.5" stroke="#444" stroke-width="1"/><line x1="0" y1="404.5" x2="21" y2="404.5" stroke="#444" stroke-width="1"/><text transform="translate(13,407.5) rotate(-90)" text-anchor="end" font-size="11.5" fill="#505050" font-family="Liberation Sans">100</text><line x1="16" y1="411.5" x2="21" y2="411.5" stroke="#444" stroke-width="1"/><line x1="16" y1="419.5" x2="21" y2="419.5" stroke="#444" stroke-width="1"/><line x1="16" y1="426.5" x2="21" y2="426.5" stroke="#444" stroke-width="1"/><line x1="16" y1="433.5" x2="21" y2="433.5" stroke="#444" stroke-width="1"/><line x1="14" y1="441.5" x2="21" y2="441.5" stroke="#444" stroke-width="1"/><line x1="16" y1="448.5" x2="21" y2="448.5" stroke="#444" stroke-width="1"/><line x1="16" y1="455.5" x2="21" y2="455.5" stroke="#444" stroke-width="1"/><line x1="16" y1="462.5" x2="21" y2="462.5" stroke="#444" stroke-width="1"/><line x1="16" y1="470.5" x2="21" y2="470.5" stroke="#444" stroke-width="1"/><line x1="0" y1="477.5" x2="21" y2="477.5" stroke="#444" stroke-width="1"/><text transform="translate(13,480.5) rotate(-90)" text-anchor="end" font-size="11.5" fill="#505050" font-family="Liberation Sans">120</text><line x1="16" y1="484.5" x2="21" y2="484.5" stroke="#444" stroke-width="1"/><line x1="16" y1="492.5" x2="21" y2="492.5" stroke="#444" stroke-width="1"/><line x1="16" y1="499.5" x2="21" y2="499.5" stroke="#444" stroke-width="1"/><line x1="16" y1="506.5" x2="21" y2="506.5" stroke="#444" stroke-width="1"/><line x1="14" y1="514.5" x2="21" y2="514.5" stroke="#444" stroke-width="1"/><line x1="16" y1="521.5" x2="21" y2="521.5" stroke="#444" stroke-width="1"/><line x1="16" y1="528.5" x2="21" y2="528.5" stroke="#444" stroke-width="1"/><line x1="16" y1="536.5" x2="21" y2="536.5" stroke="#444" stroke-width="1"/><line x1="16" y1="543.5" x2="21" y2="543.5" stroke="#444" stroke-width="1"/><line x1="0" y1="550.5" x2="21" y2="550.5" stroke="#444" stroke-width="1"/><text transform="translate(13,553.5) rotate(-90)" text-anchor="end" font-size="11.5" fill="#505050" font-family="Liberation Sans">140</text><line x1="16" y1="558.5" x2="21" y2="558.5" stroke="#444" stroke-width="1"/><line x1="16" y1="565.5" x2="21" y2="565.5" stroke="#444" stroke-width="1"/><line x1="16" y1="572.5" x2="21" y2="572.5" stroke="#444" stroke-width="1"/><line x1="16" y1="580.5" x2="21" y2="580.5" stroke="#444" stroke-width="1"/><line x1="14" y1="587.5" x2="21" y2="587.5" stroke="#444" stroke-width="1"/><line x1="16" y1="594.5" x2="21" y2="594.5" stroke="#444" stroke-width="1"/><line x1="16" y1="602.5" x2="21" y2="602.5" stroke="#444" stroke-width="1"/><line x1="16" y1="609.5" x2="21" y2="609.5" stroke="#444" stroke-width="1"/><line x1="16" y1="616.5" x2="21" y2="616.5" stroke="#444" stroke-width="1"/><line x1="0" y1="624.5" x2="21" y2="624.5" stroke="#444" stroke-width="1"/><text transform="translate(13,627.5) rotate(-90)" text-anchor="end" font-size="11.5" fill="#505050" font-family="Liberation Sans">160</text><line x1="16" y1="631.5" x2="21" y2="631.5" stroke="#444" stroke-width="1"/><line x1="16" y1="638.5" x2="21" y2="638.5" stroke="#444" stroke-width="1"/><line x1="16" y1="645.5" x2="21" y2="645.5" stroke="#444" stroke-width="1"/><line x1="16" y1="653.5" x2="21" y2="653.5" stroke="#444" stroke-width="1"/><line x1="0" y1="378.4" x2="21" y2="378.4" stroke="#e02020" stroke-width="1"/></svg><div style="position:absolute;left:61px;top:121px;width:782px;height:641px;background:#d4d4d4"></div><div style="position:absolute;left:67px;top:159px;width:769px;height:603px;background:#fff"></div><div style="position:absolute;left:836px;top:168px;width:7px;height:594px;background:#999"></div><svg style="position:absolute;left:67px;top:159px;" width="769" height="603" viewBox="0 0 769 603"><polygon points="27.5,393.9 45.5,403.5 54.4,433.9 165.5,423.0 195.7,407.8 313.5,418.4 470.5,430.6 317.3,452.7 435.7,477.4 463.1,484.1 406.2,511.0 431.5,529.0 441.0,536.3 351.5,536.3 349.4,541.6 342.0,542.2 332.5,536.7 316.7,542.2 310.4,542.6 307.9,525.8 300.9,523.3 288.3,522.0 263.0,524.1 243.3,525.5 230.4,517.5 193.6,509.9 163.5,514.4 155.7,505.4 63.1,484.7 27.5,474.2" fill="#6a9f62" stroke="#2a2a2a" stroke-width="1"/><polyline points="165.5,548.2 170.9,556.7 181.0,567.5 186.4,569.1 194.2,579.2 208.2,584.6 220.6,587.7 236.1,589.3 242.3,593.9 245.4,604.0" fill="none" stroke="#1f9ea0" stroke-width="1.8" stroke-linejoin="round"/><polyline points="266.7,534.7 264.8,544.3 262.5,555.1 260.9,570.6 262.5,576.9 260.1,586.2 257.8,595.5 253.9,604.0" fill="none" stroke="#1f9ea0" stroke-width="1.8" stroke-linejoin="round"/><polyline points="313.4,548.2 315.3,554.7 329.7,572.8 332.0,571.5 334.8,569.0 336.2,568.2 335.8,565.5 338.0,563.8 338.2,560.5 340.0,558.8 339.8,555.5 341.8,553.5 342.2,550.0 342.6,546.5 341.3,542.2" fill="none" stroke="#1f9ea0" stroke-width="1.8" stroke-linejoin="round"/><polyline points="322.2,586.2 306.0,604.0" fill="none" stroke="#1f9ea0" stroke-width="1.8" stroke-linejoin="round"/><line x1="99" y1="218.39999999999998" x2="121" y2="218.39999999999998" stroke="#111" stroke-width="1.3"/><line x1="110" y1="207.39999999999998" x2="110" y2="229.39999999999998" stroke="#111" stroke-width="1.3"/><line x1="99" y1="326.7" x2="121" y2="326.7" stroke="#111" stroke-width="1.3"/><line x1="110" y1="315.7" x2="110" y2="337.7" stroke="#111" stroke-width="1.3"/><line x1="99" y1="435" x2="121" y2="435" stroke="#111" stroke-width="1.3"/><line x1="110" y1="424" x2="110" y2="446" stroke="#111" stroke-width="1.3"/><line x1="99" y1="543.3" x2="121" y2="543.3" stroke="#111" stroke-width="1.3"/><line x1="110" y1="532.3" x2="110" y2="554.3" stroke="#111" stroke-width="1.3"/><line x1="207.3" y1="218.39999999999998" x2="229.3" y2="218.39999999999998" stroke="#111" stroke-width="1.3"/><line x1="218.3" y1="207.39999999999998" x2="218.3" y2="229.39999999999998" stroke="#111" stroke-width="1.3"/><line x1="207.3" y1="326.7" x2="229.3" y2="326.7" stroke="#111" stroke-width="1.3"/><line x1="218.3" y1="315.7" x2="218.3" y2="337.7" stroke="#111" stroke-width="1.3"/><line x1="207.3" y1="435" x2="229.3" y2="435" stroke="#111" stroke-width="1.3"/><line x1="218.3" y1="424" x2="218.3" y2="446" stroke="#111" stroke-width="1.3"/><line x1="207.3" y1="543.3" x2="229.3" y2="543.3" stroke="#111" stroke-width="1.3"/><line x1="218.3" y1="532.3" x2="218.3" y2="554.3" stroke="#111" stroke-width="1.3"/><line x1="315.6" y1="218.39999999999998" x2="337.6" y2="218.39999999999998" stroke="#111" stroke-width="1.3"/><line x1="326.6" y1="207.39999999999998" x2="326.6" y2="229.39999999999998" stroke="#111" stroke-width="1.3"/><line x1="315.6" y1="326.7" x2="337.6" y2="326.7" stroke="#111" stroke-width="1.3"/><line x1="326.6" y1="315.7" x2="326.6" y2="337.7" stroke="#111" stroke-width="1.3"/><line x1="315.6" y1="435" x2="337.6" y2="435" stroke="#111" stroke-width="1.3"/><line x1="326.6" y1="424" x2="326.6" y2="446" stroke="#111" stroke-width="1.3"/><line x1="315.6" y1="543.3" x2="337.6" y2="543.3" stroke="#111" stroke-width="1.3"/><line x1="326.6" y1="532.3" x2="326.6" y2="554.3" stroke="#111" stroke-width="1.3"/><line x1="423.9" y1="218.39999999999998" x2="445.9" y2="218.39999999999998" stroke="#111" stroke-width="1.3"/><line x1="434.9" y1="207.39999999999998" x2="434.9" y2="229.39999999999998" stroke="#111" stroke-width="1.3"/><line x1="423.9" y1="326.7" x2="445.9" y2="326.7" stroke="#111" stroke-width="1.3"/><line x1="434.9" y1="315.7" x2="434.9" y2="337.7" stroke="#111" stroke-width="1.3"/><line x1="423.9" y1="435" x2="445.9" y2="435" stroke="#111" stroke-width="1.3"/><line x1="434.9" y1="424" x2="434.9" y2="446" stroke="#111" stroke-width="1.3"/><line x1="423.9" y1="543.3" x2="445.9" y2="543.3" stroke="#111" stroke-width="1.3"/><line x1="434.9" y1="532.3" x2="434.9" y2="554.3" stroke="#111" stroke-width="1.3"/><line x1="532.2" y1="218.39999999999998" x2="554.2" y2="218.39999999999998" stroke="#111" stroke-width="1.3"/><line x1="543.2" y1="207.39999999999998" x2="543.2" y2="229.39999999999998" stroke="#111" stroke-width="1.3"/><line x1="532.2" y1="326.7" x2="554.2" y2="326.7" stroke="#111" stroke-width="1.3"/><line x1="543.2" y1="315.7" x2="543.2" y2="337.7" stroke="#111" stroke-width="1.3"/><line x1="532.2" y1="435" x2="554.2" y2="435" stroke="#111" stroke-width="1.3"/><line x1="543.2" y1="424" x2="543.2" y2="446" stroke="#111" stroke-width="1.3"/><line x1="532.2" y1="543.3" x2="554.2" y2="543.3" stroke="#111" stroke-width="1.3"/><line x1="543.2" y1="532.3" x2="543.2" y2="554.3" stroke="#111" stroke-width="1.3"/><line x1="640.5" y1="218.39999999999998" x2="662.5" y2="218.39999999999998" stroke="#111" stroke-width="1.3"/><line x1="651.5" y1="207.39999999999998" x2="651.5" y2="229.39999999999998" stroke="#111" stroke-width="1.3"/><line x1="640.5" y1="326.7" x2="662.5" y2="326.7" stroke="#111" stroke-width="1.3"/><line x1="651.5" y1="315.7" x2="651.5" y2="337.7" stroke="#111" stroke-width="1.3"/><line x1="640.5" y1="435" x2="662.5" y2="435" stroke="#111" stroke-width="1.3"/><line x1="651.5" y1="424" x2="651.5" y2="446" stroke="#111" stroke-width="1.3"/><line x1="640.5" y1="543.3" x2="662.5" y2="543.3" stroke="#111" stroke-width="1.3"/><line x1="651.5" y1="532.3" x2="651.5" y2="554.3" stroke="#111" stroke-width="1.3"/><line x1="27.400000000000006" y1="27.5" x2="741.9" y2="27.5" stroke="#000" stroke-width="1.4"/><line x1="27.400000000000006" y1="26.80000000000001" x2="27.400000000000006" y2="604" stroke="#000" stroke-width="1.4"/><line x1="741.3" y1="26.80000000000001" x2="741.3" y2="604" stroke="#000" stroke-width="1.4"/><line x1="27.400000000000006" y1="159.10000000000002" x2="741.9" y2="159.10000000000002" stroke="#000" stroke-width="1.4"/><line x1="27.400000000000006" y1="56.599999999999994" x2="546.3" y2="56.599999999999994" stroke="#000" stroke-width="1.3"/><line x1="435.6" y1="27" x2="435.6" y2="159.10000000000002" stroke="#000" stroke-width="1.3"/><line x1="546.3" y1="27" x2="546.3" y2="159.10000000000002" stroke="#333" stroke-width="1.2"/><text x="110" y="174" text-anchor="middle" font-size="14" fill="#111" stroke="#111" stroke-width="0.25" font-family="Liberation Sans">20.4</text><text x="218.3" y="174" text-anchor="middle" font-size="14" fill="#111" stroke="#111" stroke-width="0.25" font-family="Liberation Sans">20.4</text><text x="326.6" y="174" text-anchor="middle" font-size="14" fill="#111" stroke="#111" stroke-width="0.25" font-family="Liberation Sans">20.5</text><text x="434.9" y="174" text-anchor="middle" font-size="14" fill="#111" stroke="#111" stroke-width="0.25" font-family="Liberation Sans">20.5</text><text x="543.2" y="174" text-anchor="middle" font-size="14" fill="#111" stroke="#111" stroke-width="0.25" font-family="Liberation Sans">20.6</text><text x="651.5" y="174" text-anchor="middle" font-size="14" fill="#111" stroke="#111" stroke-width="0.25" font-family="Liberation Sans">20.6</text><text x="31" y="224.2" font-size="14" letter-spacing="-0.25" fill="#111" stroke="#111" stroke-width="0.25" font-family="Liberation Sans">-33.9</text><text x="706" y="224.2" font-size="14" letter-spacing="-0.25" fill="#111" stroke="#111" stroke-width="0.25" font-family="Liberation Sans">-33.9</text><text x="31" y="332.5" font-size="14" letter-spacing="-0.25" fill="#111" stroke="#111" stroke-width="0.25" font-family="Liberation Sans">-33.9</text><text x="706" y="332.5" font-size="14" letter-spacing="-0.25" fill="#111" stroke="#111" stroke-width="0.25" font-family="Liberation Sans">-33.9</text><text x="31" y="440.79999999999995" font-size="14" letter-spacing="-0.25" fill="#111" stroke="#111" stroke-width="0.25" font-family="Liberation Sans">-34.0</text><text x="706" y="440.79999999999995" font-size="14" letter-spacing="-0.25" fill="#111" stroke="#111" stroke-width="0.25" font-family="Liberation Sans">-34.0</text><text x="31" y="549.0999999999999" font-size="14" letter-spacing="-0.25" fill="#111" stroke="#111" stroke-width="0.25" font-family="Liberation Sans">-34.0</text><text x="706" y="549.0999999999999" font-size="14" letter-spacing="-0.25" fill="#111" stroke="#111" stroke-width="0.25" font-family="Liberation Sans">-34.0</text><polygon points="301.8,544.0 299.5,547.0 296.0,549.5 293.0,554.0 291.5,558.0 289.5,560.5 288.8,562.5 291.0,563.0 293.0,560.0 295.5,557.5 297.5,553.0 299.0,550.0 302.0,546.0" fill="#a9cfe8" stroke="#3a4a55" stroke-width="0.7" stroke-linejoin="round"/><polygon points="467.0,567.5 471.0,568.5 473.5,570.5 472.0,573.0 468.0,573.5 466.0,570.0" fill="#a9cfe8" stroke="#3a4a55" stroke-width="0.7" stroke-linejoin="round"/><polygon points="414.5,593.5 419.0,592.0 421.5,593.5 419.0,595.5 414.0,595.0" fill="#a9cfe8" stroke="#3a4a55" stroke-width="0.7" stroke-linejoin="round"/><polygon points="405.5,551.5 406.5,554.0 407.0,556.0 405.5,556.5 405.0,554.0" fill="#a9cfe8" stroke="#3a4a55" stroke-width="0.7" stroke-linejoin="round"/><polygon points="373.8,587.0 375.0,590.0 375.0,591.5 373.5,591.5 373.5,589.0" fill="#a9cfe8" stroke="#3a4a55" stroke-width="0.7" stroke-linejoin="round"/><polygon points="448.0,589.0 450.0,591.0 450.0,593.0 448.5,593.0 448.0,591.0" fill="#a9cfe8" stroke="#3a4a55" stroke-width="0.7" stroke-linejoin="round"/><polygon points="449.0,597.0 451.5,599.5 452.0,602.0 448.5,602.0" fill="#a9cfe8" stroke="#3a4a55" stroke-width="0.7" stroke-linejoin="round"/><circle cx="347" cy="567" r="1" fill="#5a6a75"/><circle cx="371" cy="561.3" r="1" fill="#5a6a75"/><circle cx="371.5" cy="564.5" r="1.1" fill="#5a6a75"/><circle cx="458.5" cy="557.1" r="1.3" fill="#5a6a75"/><circle cx="487" cy="567" r="0.9" fill="#5a6a75"/><circle cx="301" cy="569" r="0.7" fill="#5a6a75"/><circle cx="307.5" cy="573.6" r="0.7" fill="#5a6a75"/><circle cx="281" cy="537" r="1" fill="#5a6a75"/><circle cx="421" cy="586" r="0.6" fill="#5a6a75"/><circle cx="448" cy="584.5" r="1" fill="#5a6a75"/><circle cx="308.8" cy="588.6" r="7.3" fill="#dc1f2a" stroke="#6a1015" stroke-width="1"/><polyline points="322.3,585.8 305.0,604.0" fill="none" stroke="#1f9ea0" stroke-width="1.8" stroke-linejoin="round"/><text x="312" y="582.6" font-size="13" fill="#111" stroke="#fff" stroke-width="4" stroke-linejoin="round" paint-order="stroke" font-family="Liberation Sans">Swellendam</text><text x="318.5" y="608.6" font-size="13" fill="#111" stroke="#fff" stroke-width="4" stroke-linejoin="round" paint-order="stroke" font-family="Liberation Sans">Railton</text></svg><div style="position:absolute;left:843px;top:121px;width:1px;height:641px;background:#c8c4bf"></div><div style="position:absolute;left:844px;top:121px;width:13px;height:641px;background:linear-gradient(90deg,#fdfdfc,#ebe8e4)"></div><div style="position:absolute;left:844px;top:134px;width:13px;height:1px;background:#cfcbc6"></div><svg style="position:absolute;left:844px;top:121px;" width="13" height="13" viewBox="0 0 13 13"><path d="M2 9 L6.5 4.5 L11 9 Z" fill="#4a4a4a"/></svg><div style="position:absolute;left:844px;top:472px;width:13px;height:276px;background:#e2dfda;border-top:1px solid #cdc9c4;border-bottom:1px solid #cdc9c4;box-sizing:border-box"></div><svg style="position:absolute;left:844px;top:749px;" width="13" height="13" viewBox="0 0 13 13"><path d="M2 4 L6.5 8.5 L11 4 Z" fill="#4a4a4a"/></svg><div style="position:absolute;left:61px;top:762px;width:782px;height:1px;background:#c8c4bf"></div><div style="position:absolute;left:61px;top:763px;width:782px;height:14px;background:linear-gradient(#fdfdfc,#ebe8e4)"></div><div style="position:absolute;left:61px;top:776px;width:796px;height:1px;background:#c8c4bf"></div><svg style="position:absolute;left:61px;top:763px;" width="13" height="13" viewBox="0 0 13 13"><path d="M9 2 L4.5 6.5 L9 11 Z" fill="#4a4a4a"/></svg><div style="position:absolute;left:74px;top:763px;width:30px;height:13px;background:#e2dfda;border-left:1px solid #cdc9c4;border-right:1px solid #cdc9c4;box-sizing:border-box"></div><div style="position:absolute;left:801px;top:763px;width:29px;height:13px;background:#e2dfda;border-left:1px solid #cdc9c4;border-right:1px solid #cdc9c4;box-sizing:border-box"></div><svg style="position:absolute;left:830px;top:763px;" width="13" height="13" viewBox="0 0 13 13"><path d="M4 2 L8.5 6.5 L4 11 Z" fill="#4a4a4a"/></svg><div style="position:absolute;left:843px;top:763px;width:14px;height:13px;background:#edebe7;border-left:1px solid #d6d2cd;box-sizing:border-box"></div><div style="position:absolute;left:857px;top:99px;width:561px;height:678px;background:#edebe7"></div><div style="position:absolute;left:863px;top:127px;width:555px;height:1px;background:#bcb8b3"></div><div style="position:absolute;left:926px;top:102px;width:113px;height:25px;background:linear-gradient(#e2dfda,#dcd8d3);border:1px solid #bdb9b4;border-bottom:none;border-radius:3px 3px 0 0;box-sizing:border-box;width:114px;height:25px"></div><div class="t" style="left:937px;top:106.59px;font-size:15px;color:#1a1a1a;font-weight:normal;letter-spacing:0.2px;-webkit-text-stroke:0.2px #1a1a1a;">Undo History</div><div style="position:absolute;left:863px;top:100px;width:62px;height:28px;background:linear-gradient(#f8f6f3,#efece8);border:1px solid #b9b5b0;border-bottom:none;border-radius:3px 3px 0 0;box-sizing:border-box;width:63px;height:29px"></div><div class="t" style="left:874px;top:106.59px;font-size:15px;color:#1a1a1a;font-weight:normal;letter-spacing:0.2px;-webkit-text-stroke:0.2px #1a1a1a;">Items</div><div class="t" style="left:866.6px;top:129.88px;font-size:15px;color:#1a1a1a;font-weight:normal;letter-spacing:0.2px;-webkit-text-stroke:0.2px #1a1a1a;">Items</div><svg style="position:absolute;left:1391px;top:133px;" width="27" height="11" viewBox="0 0 27 11"><rect x="0.5" y="0.5" width="10" height="10" rx="2" fill="none" stroke="#6d6a66"/><rect x="4.5" y="2.5" width="4" height="4" rx="0.8" fill="none" stroke="#6d6a66"/><rect x="2.5" y="4.5" width="4" height="4" rx="0.8" fill="#edebe7" stroke="#6d6a66"/><rect x="14.5" y="0.5" width="10" height="10" rx="2" fill="none" stroke="#6d6a66"/><path d="M16.5 2.5 L22.5 8.5 M22.5 2.5 L16.5 8.5" stroke="#555" stroke-width="2"/></svg><div style="position:absolute;left:863px;top:148px;width:555px;height:206px;background:#fff;border:1px solid #b3afaa;box-sizing:border-box"></div><div style="position:absolute;left:864px;top:149px;width:539px;height:21px;background:linear-gradient(#fbfaf8,#ebe8e3);border-bottom:1px solid #b6b2ad;box-sizing:border-box"></div><div style="position:absolute;left:920px;top:149px;width:1px;height:20px;background:#c9c5c0"></div><div style="position:absolute;left:977px;top:149px;width:1px;height:20px;background:#c9c5c0"></div><svg style="position:absolute;left:866px;top:152px;" width="18" height="14" viewBox="0 0 18 14"><path d="M0.8 7 Q6 1 12 2.5 Q15 3.5 16 7 Q11 13.5 5 11.5 Q2 10.5 0.8 7 Z" fill="#f4f4f4" stroke="#a5a5a5" stroke-width="0.9"/><circle cx="7.8" cy="6.8" r="3.6" fill="#9a9a9a" stroke="#7a7a7a" stroke-width="0.6"/><circle cx="8.2" cy="6.3" r="1.2" fill="#111"/></svg><svg style="position:absolute;left:924px;top:151px;" width="14" height="17" viewBox="0 0 14 17"><path d="M3.3 8.5 V5.2 A3.7 3.7 0 0 1 10.7 5.2 V8.5" fill="none" stroke="#666" stroke-width="2.2"/><path d="M3.3 8.5 V5.2 A3.7 3.7 0 0 1 10.7 5.2 V8.5" fill="none" stroke="#f2f0ec" stroke-width="0.8"/><rect x="1.3" y="8" width="11.6" height="7.8" rx="1.5" fill="#666"/></svg><div class="t" style="left:979px;top:151.19px;font-size:15px;color:#1a1a1a;font-weight:normal;letter-spacing:0.2px;-webkit-text-stroke:0.2px #1a1a1a;">Item</div><div style="position:absolute;left:1403px;top:149px;width:14px;height:204px;background:linear-gradient(90deg,#fdfdfc,#ece9e5);border-left:1px solid #c9c5c0;box-sizing:border-box"></div><div style="position:absolute;left:1404px;top:162px;width:13px;height:1px;background:#d6d2cd"></div><svg style="position:absolute;left:1405px;top:152px;" width="12" height="8" viewBox="0 0 12 8"><path d="M1.5 6.5 L5.5 2 L9.5 6.5 Z" fill="#4a4a4a"/></svg><div style="position:absolute;left:1404px;top:307px;width:13px;height:33px;background:#e2dfda;border-top:1px solid #cbc7c2;border-bottom:1px solid #cbc7c2;box-sizing:border-box"></div><svg style="position:absolute;left:1405px;top:341px;" width="12" height="8" viewBox="0 0 12 8"><path d="M1.5 2 L5.5 6.5 L9.5 2 Z" fill="#4a4a4a"/></svg><div style="position:absolute;left:0;top:0;width:1403px;height:353px;overflow:hidden"><div style="position:absolute;left:867px;top:172.0px;width:14px;height:14px;background:#fff;border:1px solid #aaa6a1;border-radius:1px;box-sizing:border-box"></div><div style="position:absolute;left:924px;top:172.0px;width:14px;height:14px;background:#fff;border:1px solid #aaa6a1;border-radius:1px;box-sizing:border-box"></div><svg style="position:absolute;left:924px;top:172.0px;" width="14" height="14" viewBox="0 0 14 14"><path d="M3 6.5 L6 10.5 L11 2.5" fill="none" stroke="#111" stroke-width="1.8"/></svg><svg style="position:absolute;left:982px;top:171.5px;" width="15" height="14" viewBox="0 0 15 14"><rect x="0.5" y="2.5" width="13" height="9.5" fill="#eeeeee" stroke="#777"/><path d="M1 3 H13.5 V8.3 L4 3.9 L1 5.5 Z" fill="#3a3a3a"/></svg><div class="t" style="left:1002.5px;top:170.28px;font-size:15px;color:#1a1a1a;font-weight:normal;letter-spacing:0.2px;-webkit-text-stroke:0.2px #1a1a1a;">logo organisation</div><div style="position:absolute;left:867px;top:191.0px;width:14px;height:14px;background:#fff;border:1px solid #aaa6a1;border-radius:1px;box-sizing:border-box"></div><svg style="position:absolute;left:867px;top:191.0px;" width="14" height="14" viewBox="0 0 14 14"><path d="M3 6.5 L6 10.5 L11 2.5" fill="none" stroke="#111" stroke-width="1.8"/></svg><div style="position:absolute;left:924px;top:191.0px;width:14px;height:14px;background:#fff;border:1px solid #aaa6a1;border-radius:1px;box-sizing:border-box"></div><svg style="position:absolute;left:924px;top:191.0px;" width="14" height="14" viewBox="0 0 14 14"><path d="M3 6.5 L6 10.5 L11 2.5" fill="none" stroke="#111" stroke-width="1.8"/></svg><svg style="position:absolute;left:982px;top:190.5px;" width="15" height="14" viewBox="0 0 15 14"><path d="M11.8 2.7 L3.4 1.7 L1.4 7.6 L5.4 12.5" fill="none" stroke="#666" stroke-width="1"/><circle cx="11.8" cy="2.7" r="1.4" fill="#aaa" stroke="#888" stroke-width="0.5"/><circle cx="3.4" cy="1.7" r="1.3" fill="#aaa" stroke="#888" stroke-width="0.5"/><circle cx="1.4" cy="7.6" r="1.3" fill="#aaa" stroke="#888" stroke-width="0.5"/><circle cx="5.4" cy="12.5" r="1.4" fill="#aaa" stroke="#888" stroke-width="0.5"/></svg><div class="t" style="left:1002.5px;top:189.28px;font-size:15px;color:#1a1a1a;font-weight:normal;letter-spacing:0.2px;-webkit-text-stroke:0.2px #1a1a1a;">vertical line 2</div><div style="position:absolute;left:867px;top:210.0px;width:14px;height:14px;background:#fff;border:1px solid #aaa6a1;border-radius:1px;box-sizing:border-box"></div><svg style="position:absolute;left:867px;top:210.0px;" width="14" height="14" viewBox="0 0 14 14"><path d="M3 6.5 L6 10.5 L11 2.5" fill="none" stroke="#111" stroke-width="1.8"/></svg><div style="position:absolute;left:924px;top:210.0px;width:14px;height:14px;background:#fff;border:1px solid #aaa6a1;border-radius:1px;box-sizing:border-box"></div><svg style="position:absolute;left:924px;top:210.0px;" width="14" height="14" viewBox="0 0 14 14"><path d="M3 6.5 L6 10.5 L11 2.5" fill="none" stroke="#111" stroke-width="1.8"/></svg><svg style="position:absolute;left:982px;top:209.5px;" width="15" height="14" viewBox="0 0 15 14"><path d="M11.8 2.7 L3.4 1.7 L1.4 7.6 L5.4 12.5" fill="none" stroke="#666" stroke-width="1"/><circle cx="11.8" cy="2.7" r="1.4" fill="#aaa" stroke="#888" stroke-width="0.5"/><circle cx="3.4" cy="1.7" r="1.3" fill="#aaa" stroke="#888" stroke-width="0.5"/><circle cx="1.4" cy="7.6" r="1.3" fill="#aaa" stroke="#888" stroke-width="0.5"/><circle cx="5.4" cy="12.5" r="1.4" fill="#aaa" stroke="#888" stroke-width="0.5"/></svg><div class="t" style="left:1002.5px;top:208.28px;font-size:15px;color:#1a1a1a;font-weight:normal;letter-spacing:0.2px;-webkit-text-stroke:0.2px #1a1a1a;">vertical line 1</div><div style="position:absolute;left:867px;top:229.0px;width:14px;height:14px;background:#fff;border:1px solid #aaa6a1;border-radius:1px;box-sizing:border-box"></div><div style="position:absolute;left:924px;top:229.0px;width:14px;height:14px;background:#fff;border:1px solid #aaa6a1;border-radius:1px;box-sizing:border-box"></div><svg style="position:absolute;left:924px;top:229.0px;" width="14" height="14" viewBox="0 0 14 14"><path d="M3 6.5 L6 10.5 L11 2.5" fill="none" stroke="#111" stroke-width="1.8"/></svg><svg style="position:absolute;left:982px;top:228.5px;" width="15" height="14" viewBox="0 0 15 14"><rect x="0.5" y="0.5" width="13" height="12" fill="#eee" stroke="#888"/><path d="M4 3.5 H10 M7 3.5 V10.5 M5.5 10.5 H8.5" stroke="#444" stroke-width="1.3" fill="none"/></svg><div class="t" style="left:1002.5px;top:227.28px;font-size:15px;color:#1a1a1a;font-weight:normal;letter-spacing:0.2px;-webkit-text-stroke:0.2px #1a1a1a;">map description</div><div style="position:absolute;left:867px;top:248.0px;width:14px;height:14px;background:#fff;border:1px solid #aaa6a1;border-radius:1px;box-sizing:border-box"></div><div style="position:absolute;left:924px;top:248.0px;width:14px;height:14px;background:#fff;border:1px solid #aaa6a1;border-radius:1px;box-sizing:border-box"></div><svg style="position:absolute;left:924px;top:248.0px;" width="14" height="14" viewBox="0 0 14 14"><path d="M3 6.5 L6 10.5 L11 2.5" fill="none" stroke="#111" stroke-width="1.8"/></svg><svg style="position:absolute;left:982px;top:247.5px;" width="15" height="14" viewBox="0 0 15 14"><rect x="0.5" y="5" width="13" height="4" fill="#444"/><rect x="5" y="6" width="4" height="2" fill="#fff"/></svg><div class="t" style="left:1002.5px;top:246.29px;font-size:15px;color:#1a1a1a;font-weight:normal;letter-spacing:0.2px;-webkit-text-stroke:0.2px #1a1a1a;">scale</div><div style="position:absolute;left:867px;top:267.0px;width:14px;height:14px;background:#fff;border:1px solid #aaa6a1;border-radius:1px;box-sizing:border-box"></div><div style="position:absolute;left:924px;top:267.0px;width:14px;height:14px;background:#fff;border:1px solid #aaa6a1;border-radius:1px;box-sizing:border-box"></div><svg style="position:absolute;left:924px;top:267.0px;" width="14" height="14" viewBox="0 0 14 14"><path d="M3 6.5 L6 10.5 L11 2.5" fill="none" stroke="#111" stroke-width="1.8"/></svg><svg style="position:absolute;left:982px;top:266.5px;" width="15" height="14" viewBox="0 0 15 14"><rect x="0.5" y="2.5" width="13" height="9.5" fill="#eeeeee" stroke="#777"/><path d="M1 3 H13.5 V8.3 L4 3.9 L1 5.5 Z" fill="#3a3a3a"/></svg><div class="t" style="left:1002.5px;top:265.29px;font-size:15px;color:#1a1a1a;font-weight:normal;letter-spacing:0.2px;-webkit-text-stroke:0.2px #1a1a1a;">north arrow</div><div style="position:absolute;left:867px;top:286.0px;width:14px;height:14px;background:#fff;border:1px solid #aaa6a1;border-radius:1px;box-sizing:border-box"></div><div style="position:absolute;left:924px;top:286.0px;width:14px;height:14px;background:#fff;border:1px solid #aaa6a1;border-radius:1px;box-sizing:border-box"></div><svg style="position:absolute;left:924px;top:286.0px;" width="14" height="14" viewBox="0 0 14 14"><path d="M3 6.5 L6 10.5 L11 2.5" fill="none" stroke="#111" stroke-width="1.8"/></svg><svg style="position:absolute;left:982px;top:285.5px;" width="15" height="14" viewBox="0 0 15 14"><rect x="0.5" y="0.5" width="13" height="12" fill="#eee" stroke="#888"/><path d="M4 3.5 H10 M7 3.5 V10.5 M5.5 10.5 H8.5" stroke="#444" stroke-width="1.3" fill="none"/></svg><div class="t" style="left:1002.5px;top:284.29px;font-size:15px;color:#1a1a1a;font-weight:normal;letter-spacing:0.2px;-webkit-text-stroke:0.2px #1a1a1a;">project title (Variable)</div><div style="position:absolute;left:867px;top:305.0px;width:14px;height:14px;background:#fff;border:1px solid #aaa6a1;border-radius:1px;box-sizing:border-box"></div><div style="position:absolute;left:924px;top:305.0px;width:14px;height:14px;background:#fff;border:1px solid #aaa6a1;border-radius:1px;box-sizing:border-box"></div><svg style="position:absolute;left:924px;top:305.0px;" width="14" height="14" viewBox="0 0 14 14"><path d="M3 6.5 L6 10.5 L11 2.5" fill="none" stroke="#111" stroke-width="1.8"/></svg><svg style="position:absolute;left:982px;top:304.5px;" width="15" height="14" viewBox="0 0 15 14"><rect x="0.5" y="0.5" width="13" height="12" fill="#eee" stroke="#888"/><path d="M4 3.5 H10 M7 3.5 V10.5 M5.5 10.5 H8.5" stroke="#444" stroke-width="1.3" fill="none"/></svg><div class="t" style="left:1002.5px;top:303.29px;font-size:15px;color:#1a1a1a;font-weight:normal;letter-spacing:0.2px;-webkit-text-stroke:0.2px #1a1a1a;">organisation information (Variables)</div><div style="position:absolute;left:867px;top:324.0px;width:14px;height:14px;background:#fff;border:1px solid #aaa6a1;border-radius:1px;box-sizing:border-box"></div><svg style="position:absolute;left:867px;top:324.0px;" width="14" height="14" viewBox="0 0 14 14"><path d="M3 6.5 L6 10.5 L11 2.5" fill="none" stroke="#111" stroke-width="1.8"/></svg><div style="position:absolute;left:924px;top:324.0px;width:14px;height:14px;background:#fff;border:1px solid #aaa6a1;border-radius:1px;box-sizing:border-box"></div><svg style="position:absolute;left:924px;top:324.0px;" width="14" height="14" viewBox="0 0 14 14"><path d="M3 6.5 L6 10.5 L11 2.5" fill="none" stroke="#111" stroke-width="1.8"/></svg><svg style="position:absolute;left:982px;top:323.5px;" width="15" height="14" viewBox="0 0 15 14"><path d="M11.8 2.7 L3.4 1.7 L1.4 7.6 L5.4 12.5" fill="none" stroke="#666" stroke-width="1"/><circle cx="11.8" cy="2.7" r="1.4" fill="#aaa" stroke="#888" stroke-width="0.5"/><circle cx="3.4" cy="1.7" r="1.3" fill="#aaa" stroke="#888" stroke-width="0.5"/><circle cx="1.4" cy="7.6" r="1.3" fill="#aaa" stroke="#888" stroke-width="0.5"/><circle cx="5.4" cy="12.5" r="1.4" fill="#aaa" stroke="#888" stroke-width="0.5"/></svg><div class="t" style="left:1002.5px;top:322.29px;font-size:15px;color:#1a1a1a;font-weight:normal;letter-spacing:0.2px;-webkit-text-stroke:0.2px #1a1a1a;">horizontal line</div><div style="position:absolute;left:867px;top:343.0px;width:14px;height:14px;background:#fff;border:1px solid #aaa6a1;border-radius:1px;box-sizing:border-box"></div><svg style="position:absolute;left:867px;top:343.0px;" width="14" height="14" viewBox="0 0 14 14"><path d="M3 6.5 L6 10.5 L11 2.5" fill="none" stroke="#111" stroke-width="1.8"/></svg><div style="position:absolute;left:924px;top:343.0px;width:14px;height:14px;background:#fff;border:1px solid #aaa6a1;border-radius:1px;box-sizing:border-box"></div><svg style="position:absolute;left:924px;top:343.0px;" width="14" height="14" viewBox="0 0 14 14"><path d="M3 6.5 L6 10.5 L11 2.5" fill="none" stroke="#111" stroke-width="1.8"/></svg><svg style="position:absolute;left:982px;top:342.5px;" width="15" height="14" viewBox="0 0 15 14"><rect x="0.5" y="0.5" width="13" height="12" fill="#eee" stroke="#aaa"/></svg><div class="t" style="left:1002.5px;top:341.29px;font-size:15px;color:#1a1a1a;font-weight:normal;letter-spacing:0.2px;-webkit-text-stroke:0.2px #1a1a1a;">header</div></div><svg style="position:absolute;left:1132px;top:355px;" width="20" height="3" viewBox="0 0 20 3"><rect x="2" y="1" width="1" height="1" fill="#aaa"/><rect x="5" y="1" width="1" height="1" fill="#aaa"/><rect x="8" y="1" width="1" height="1" fill="#aaa"/><rect x="11" y="1" width="1" height="1" fill="#aaa"/><rect x="14" y="1" width="1" height="1" fill="#aaa"/><rect x="17" y="1" width="1" height="1" fill="#aaa"/></svg><div style="position:absolute;left:863px;top:387px;width:555px;height:1px;background:#bcb8b3"></div><div style="position:absolute;left:863px;top:362px;width:71px;height:25px;background:linear-gradient(#e2dfda,#dcd8d3);border:1px solid #bdb9b4;border-bottom:none;border-radius:3px 3px 0 0;box-sizing:border-box;width:72px;height:25px"></div><div class="t" style="left:874.8px;top:367.29px;font-size:15px;color:#1a1a1a;font-weight:normal;letter-spacing:0.2px;-webkit-text-stroke:0.2px #1a1a1a;">Layout</div><div style="position:absolute;left:1066px;top:362px;width:70px;height:25px;background:linear-gradient(#e2dfda,#dcd8d3);border:1px solid #bdb9b4;border-bottom:none;border-radius:3px 3px 0 0;box-sizing:border-box;width:71px;height:25px"></div><div class="t" style="left:1076px;top:367.29px;font-size:15px;color:#1a1a1a;font-weight:normal;letter-spacing:0.2px;-webkit-text-stroke:0.2px #1a1a1a;">Guides</div><div style="position:absolute;left:1137px;top:362px;width:57px;height:25px;background:linear-gradient(#e2dfda,#dcd8d3);border:1px solid #bdb9b4;border-bottom:none;border-radius:3px 3px 0 0;box-sizing:border-box;width:58px;height:25px"></div><div class="t" style="left:1147.4px;top:367.29px;font-size:15px;color:#1a1a1a;font-weight:normal;letter-spacing:0.2px;-webkit-text-stroke:0.2px #1a1a1a;">Atlas</div><div style="position:absolute;left:935px;top:360px;width:130px;height:27px;background:linear-gradient(#f8f6f3,#efece8);border:1px solid #b9b5b0;border-bottom:none;border-radius:3px 3px 0 0;box-sizing:border-box;width:131px;height:28px"></div><div class="t" style="left:945.6px;top:367.29px;font-size:15px;color:#1a1a1a;font-weight:normal;letter-spacing:0.2px;-webkit-text-stroke:0.2px #1a1a1a;">Item Properties</div><div class="t" style="left:866.4px;top:389.79px;font-size:15px;color:#1a1a1a;font-weight:normal;letter-spacing:0.2px;-webkit-text-stroke:0.2px #1a1a1a;">Item Properties</div><svg style="position:absolute;left:1391px;top:393px;" width="27" height="11" viewBox="0 0 27 11"><rect x="0.5" y="0.5" width="10" height="10" rx="2" fill="none" stroke="#6d6a66"/><rect x="4.5" y="2.5" width="4" height="4" rx="0.8" fill="none" stroke="#6d6a66"/><rect x="2.5" y="4.5" width="4" height="4" rx="0.8" fill="#edebe7" stroke="#6d6a66"/><rect x="14.5" y="0.5" width="10" height="10" rx="2" fill="none" stroke="#6d6a66"/><path d="M16.5 2.5 L22.5 8.5 M22.5 2.5 L16.5 8.5" stroke="#555" stroke-width="2"/></svg><div style="position:absolute;left:863px;top:408px;width:28px;height:24px;background:linear-gradient(#fbfaf8,#ebe8e3);border:1px solid #b5b1ac;border-radius:3px;box-sizing:border-box"></div><svg style="position:absolute;left:863px;top:408px;" width="28" height="24" viewBox="0 0 28 24"><path d="M19 5.5 L8.5 12 L19 18.5 Z" fill="#6f9bd1" stroke="#3b5f8f" stroke-width="1"/></svg><div class="t" style="left:899.7px;top:410.69px;font-size:15px;color:#1a1a1a;font-weight:normal;letter-spacing:0.2px;-webkit-text-stroke:0.2px #1a1a1a;">Map Grid Properties</div><div style="position:absolute;left:0;top:0;width:1418px;height:777px;overflow:hidden"><svg style="position:absolute;left:865px;top:444px;" width="12" height="9" viewBox="0 0 12 9"><path d="M0.5 1 L10.5 1 L5.5 8 Z" fill="#3a3a3a"/></svg><div class="t" style="left:884.4px;top:438.99px;font-size:15px;color:#1a1a1a;font-weight:bold;letter-spacing:0.1px;-webkit-text-stroke:0.1px #1a1a1a;">Appearance</div><div style="position:absolute;left:864px;top:459px;width:540px;height:330px;background:#ebe8e4;border:1px solid #d3cfca;border-radius:3px;box-sizing:border-box"></div><div class="t" style="left:876px;top:475.99px;font-size:15px;color:#1a1a1a;font-weight:normal;letter-spacing:0.2px;-webkit-text-stroke:0.2px #1a1a1a;">Grid type</div><div class="t" style="left:876px;top:506.79px;font-size:15px;color:#1a1a1a;font-weight:normal;letter-spacing:0.2px;-webkit-text-stroke:0.2px #1a1a1a;">CRS</div><div class="t" style="left:876px;top:537.88px;font-size:15px;color:#1a1a1a;font-weight:normal;letter-spacing:0.2px;-webkit-text-stroke:0.2px #1a1a1a;">Interval units</div><div class="t" style="left:876px;top:586.48px;font-size:15px;color:#1a1a1a;font-weight:normal;letter-spacing:0.2px;-webkit-text-stroke:0.2px #1a1a1a;">Interval</div><div class="t" style="left:876px;top:649.78px;font-size:15px;color:#1a1a1a;font-weight:normal;letter-spacing:0.2px;-webkit-text-stroke:0.2px #1a1a1a;">Offset</div><div class="t" style="left:876px;top:697.98px;font-size:15px;color:#1a1a1a;font-weight:normal;letter-spacing:0.2px;-webkit-text-stroke:0.2px #1a1a1a;">Cross width</div><div class="t" style="left:876px;top:727.98px;font-size:15px;color:#1a1a1a;font-weight:normal;letter-spacing:0.2px;-webkit-text-stroke:0.2px #1a1a1a;">Line style</div><div class="t" style="left:876px;top:757.48px;font-size:15px;color:#1a1a1a;font-weight:normal;letter-spacing:0.2px;-webkit-text-stroke:0.2px #1a1a1a;">Blend mode</div><div style="position:absolute;left:1137px;top:472px;width:253px;height:25px;background:linear-gradient(#fbfaf8,#eae7e2);border:1px solid #b3afaa;border-radius:3px;box-sizing:border-box"></div><div class="t" style="left:1141.7px;top:475.99px;font-size:15px;color:#1a1a1a;font-weight:normal;letter-spacing:0.2px;-webkit-text-stroke:0.2px #1a1a1a;">Cross</div><svg style="position:absolute;left:1372px;top:482px;" width="10" height="6" viewBox="0 0 10 6"><path d="M0.5 0.5 L9.5 0.5 L5 5.5 Z" fill="#4a4a4a"/></svg><div style="position:absolute;left:1137px;top:503px;width:253px;height:25px;background:linear-gradient(#fbfaf8,#eae7e2);border:1px solid #b3afaa;border-radius:3px;box-sizing:border-box"></div><div class="t" style="left:1226px;top:507.69px;font-size:15px;color:#1a1a1a;font-weight:normal;letter-spacing:-0.2px;-webkit-text-stroke:0.2px #1a1a1a;">EPSG:4326</div><div style="position:absolute;left:1137px;top:534px;width:253px;height:25px;background:linear-gradient(#fbfaf8,#eae7e2);border:1px solid #b3afaa;border-radius:3px;box-sizing:border-box"></div><div class="t" style="left:1141.7px;top:537.98px;font-size:15px;color:#1a1a1a;font-weight:normal;letter-spacing:0.2px;-webkit-text-stroke:0.2px #1a1a1a;">Map unit</div><svg style="position:absolute;left:1372px;top:544px;" width="10" height="6" viewBox="0 0 10 6"><path d="M0.5 0.5 L9.5 0.5 L5 5.5 Z" fill="#4a4a4a"/></svg><div style="position:absolute;left:1137px;top:566px;width:253px;height:24px;background:#fff;border:1px solid #b3afaa;border-radius:3px;box-sizing:border-box"></div><div style="position:absolute;left:1374px;top:567px;width:15px;height:22px;background:linear-gradient(#fbfaf8,#eeebe7);border-left:1px solid #c9c5c0;border-radius:0 2px 2px 0;box-sizing:border-box"></div><svg style="position:absolute;left:1375px;top:567px;" width="14" height="22" viewBox="0 0 14 22"><path d="M3.5 8 L7 4 L10.5 8 Z" fill="#4a4a4a"/><path d="M3.5 14 L7 18 L10.5 14 Z" fill="#4a4a4a"/></svg><div class="t" style="left:1141.7px;top:569.78px;font-size:15px;color:#1a1a1a;font-weight:normal;letter-spacing:-0.15px;-webkit-text-stroke:0.2px #1a1a1a;">X 0,050000000000</div><svg style="position:absolute;left:1349px;top:572px;" width="16" height="12" viewBox="0 0 16 12"><path d="M5 1 H15 V11 H5 L0.5 6 Z" fill="#9d9d9d"/><path d="M7.5 3.5 L12 8.5 M12 3.5 L7.5 8.5" stroke="#fff" stroke-width="1.5"/></svg><div style="position:absolute;left:1137px;top:598px;width:253px;height:24px;background:#fff;border:1px solid #b3afaa;border-radius:3px;box-sizing:border-box"></div><div style="position:absolute;left:1374px;top:599px;width:15px;height:22px;background:linear-gradient(#fbfaf8,#eeebe7);border-left:1px solid #c9c5c0;border-radius:0 2px 2px 0;box-sizing:border-box"></div><svg style="position:absolute;left:1375px;top:599px;" width="14" height="22" viewBox="0 0 14 22"><path d="M3.5 8 L7 4 L10.5 8 Z" fill="#4a4a4a"/><path d="M3.5 14 L7 18 L10.5 14 Z" fill="#4a4a4a"/></svg><div class="t" style="left:1141.7px;top:601.78px;font-size:15px;color:#1a1a1a;font-weight:normal;letter-spacing:-0.15px;-webkit-text-stroke:0.2px #1a1a1a;">Y 0,050000000000</div><svg style="position:absolute;left:1349px;top:604px;" width="16" height="12" viewBox="0 0 16 12"><path d="M5 1 H15 V11 H5 L0.5 6 Z" fill="#9d9d9d"/><path d="M7.5 3.5 L12 8.5 M12 3.5 L7.5 8.5" stroke="#fff" stroke-width="1.5"/></svg><div style="position:absolute;left:1137px;top:630px;width:253px;height:24px;background:#fff;border:1px solid #b3afaa;border-radius:3px;box-sizing:border-box"></div><div style="position:absolute;left:1374px;top:631px;width:15px;height:22px;background:linear-gradient(#fbfaf8,#eeebe7);border-left:1px solid #c9c5c0;border-radius:0 2px 2px 0;box-sizing:border-box"></div><svg style="position:absolute;left:1375px;top:631px;" width="14" height="22" viewBox="0 0 14 22"><path d="M3.5 8 L7 4 L10.5 8 Z" fill="#4a4a4a"/><path d="M3.5 14 L7 18 L10.5 14 Z" fill="#4a4a4a"/></svg><div class="t" style="left:1141.7px;top:633.78px;font-size:15px;color:#1a1a1a;font-weight:normal;letter-spacing:-0.15px;-webkit-text-stroke:0.2px #1a1a1a;">X 0,050000000000</div><svg style="position:absolute;left:1349px;top:636px;" width="16" height="12" viewBox="0 0 16 12"><path d="M5 1 H15 V11 H5 L0.5 6 Z" fill="#9d9d9d"/><path d="M7.5 3.5 L12 8.5 M12 3.5 L7.5 8.5" stroke="#fff" stroke-width="1.5"/></svg><div style="position:absolute;left:1137px;top:662px;width:253px;height:24px;background:#fff;border:1px solid #b3afaa;border-radius:3px;box-sizing:border-box"></div><div style="position:absolute;left:1374px;top:663px;width:15px;height:22px;background:linear-gradient(#fbfaf8,#eeebe7);border-left:1px solid #c9c5c0;border-radius:0 2px 2px 0;box-sizing:border-box"></div><svg style="position:absolute;left:1375px;top:663px;" width="14" height="22" viewBox="0 0 14 22"><path d="M3.5 8 L7 4 L10.5 8 Z" fill="#4a4a4a"/><path d="M3.5 14 L7 18 L10.5 14 Z" fill="#a9a9a9"/></svg><div class="t" style="left:1141.7px;top:665.78px;font-size:15px;color:#1a1a1a;font-weight:normal;letter-spacing:-0.15px;-webkit-text-stroke:0.2px #1a1a1a;">Y 0,000000000000</div><div style="position:absolute;left:1137px;top:694px;width:253px;height:24px;background:#fff;border:1px solid #b3afaa;border-radius:3px;box-sizing:border-box"></div><div style="position:absolute;left:1374px;top:695px;width:15px;height:22px;background:linear-gradient(#fbfaf8,#eeebe7);border-left:1px solid #c9c5c0;border-radius:0 2px 2px 0;box-sizing:border-box"></div><svg style="position:absolute;left:1375px;top:695px;" width="14" height="22" viewBox="0 0 14 22"><path d="M3.5 8 L7 4 L10.5 8 Z" fill="#4a4a4a"/><path d="M3.5 14 L7 18 L10.5 14 Z" fill="#4a4a4a"/></svg><div class="t" style="left:1141.7px;top:697.78px;font-size:15px;color:#1a1a1a;font-weight:normal;letter-spacing:-0.15px;-webkit-text-stroke:0.2px #1a1a1a;">3,00 mm</div><div style="position:absolute;left:1137px;top:725px;width:241px;height:23px;background:linear-gradient(#fbfaf8,#eae7e2);border:1px solid #b3afaa;border-radius:3px;box-sizing:border-box"></div><div style="position:absolute;left:1142px;top:736px;width:231px;height:1px;background:#222"></div><div style="position:absolute;left:1378px;top:725px;width:12px;height:23px;background:linear-gradient(#fbfaf8,#eae7e2);border:1px solid #b3afaa;border-radius:3px;box-sizing:border-box"></div><svg style="position:absolute;left:1379px;top:734px;" width="10" height="6" viewBox="0 0 10 6"><path d="M1 0.5 L9 0.5 L5 5 Z" fill="#3a3a3a"/></svg><div style="position:absolute;left:1137px;top:754px;width:253px;height:25px;background:linear-gradient(#fbfaf8,#eae7e2);border:1px solid #b3afaa;border-radius:3px;box-sizing:border-box"></div><div class="t" style="left:1141.7px;top:757.98px;font-size:15px;color:#1a1a1a;font-weight:normal;letter-spacing:0.2px;-webkit-text-stroke:0.2px #1a1a1a;">Normal</div><svg style="position:absolute;left:1372px;top:764px;" width="10" height="6" viewBox="0 0 10 6"><path d="M0.5 0.5 L9.5 0.5 L5 5.5 Z" fill="#4a4a4a"/></svg></div><div style="position:absolute;left:1404px;top:438px;width:14px;height:339px;background:#e2dfda;border-left:1px solid #c9c5c0;box-sizing:border-box"></div><div style="position:absolute;left:1405px;top:438px;width:13px;height:96px;background:linear-gradient(90deg,#fdfdfc,#ece9e5)"></div><div style="position:absolute;left:1405px;top:451px;width:13px;height:1px;background:#d6d2cd"></div><div style="position:absolute;left:1405px;top:533px;width:13px;height:1px;background:#d0ccc7"></div><svg style="position:absolute;left:1405px;top:441px;" width="12" height="8" viewBox="0 0 12 8"><path d="M1.5 6.5 L5.5 2 L9.5 6.5 Z" fill="#4a4a4a"/></svg><div style="position:absolute;left:1405px;top:763px;width:13px;height:14px;background:linear-gradient(90deg,#fdfdfc,#ece9e5);border-top:1px solid #cbc7c2;box-sizing:border-box"></div><svg style="position:absolute;left:1405px;top:767px;" width="12" height="8" viewBox="0 0 12 8"><path d="M1.5 2 L5.5 6.5 L9.5 2 Z" fill="#4a4a4a"/></svg><svg style="position:absolute;left:859px;top:430px;" width="3" height="20" viewBox="0 0 3 20"><rect x="1" y="2" width="1" height="1" fill="#aaa"/><rect x="1" y="5" width="1" height="1" fill="#aaa"/><rect x="1" y="8" width="1" height="1" fill="#aaa"/><rect x="1" y="11" width="1" height="1" fill="#aaa"/><rect x="1" y="14" width="1" height="1" fill="#aaa"/><rect x="1" y="17" width="1" height="1" fill="#aaa"/></svg><div style="position:absolute;left:0px;top:777px;width:1418px;height:30px;background:#edebe7"></div><div class="t" style="left:6px;top:783.68px;font-size:15px;color:#1a1a1a;font-weight:normal;letter-spacing:0.2px;-webkit-text-stroke:0.2px #1a1a1a;">1 item selected</div><div class="t" style="left:828px;top:783.68px;font-size:15px;color:#1a1a1a;font-weight:normal;letter-spacing:-0.13px;-webkit-text-stroke:0.2px #1a1a1a;">x: 124.577 mm&nbsp; y: 92.8866 mm&nbsp; page: 1</div><div style="position:absolute;left:1148px;top:781px;width:140px;height:24px;background:#fff;border:1px solid #b3afaa;border-radius:3px;box-sizing:border-box"></div><div style="position:absolute;left:1267px;top:782px;width:20px;height:22px;background:linear-gradient(#fbfaf8,#eeebe7);border-left:1px solid #c9c5c0;border-radius:0 2px 2px 0;box-sizing:border-box"></div><svg style="position:absolute;left:1272px;top:790px;" width="10" height="6" viewBox="0 0 10 6"><path d="M0.5 0.5 L9.5 0.5 L5 5.5 Z" fill="#4a4a4a"/></svg><div class="t" style="left:1150.3px;top:784.18px;font-size:15px;color:#1a1a1a;font-weight:normal;letter-spacing:-0.2px;-webkit-text-stroke:0.2px #1a1a1a;">96.8%</div><div style="position:absolute;left:1295px;top:789px;width:97px;height:6px;background:linear-gradient(#d9d6d1,#f0eeea);border:1px solid #b8b4af;border-radius:3px;box-sizing:border-box"></div><div style="position:absolute;left:1296px;top:790px;width:10px;height:4px;background:#4a90d9;border-radius:2px"></div><div style="position:absolute;left:1303px;top:786px;width:12px;height:13px;background:linear-gradient(#fdfdfc,#e6e3de);border:1px solid #a9a5a0;border-radius:3px;box-sizing:border-box"></div><svg style="position:absolute;left:1404px;top:794px;" width="14" height="13" viewBox="0 0 14 13"><rect x="11" y="2" width="1" height="1" fill="#b0aca7"/><rect x="8" y="5" width="1" height="1" fill="#b0aca7"/><rect x="11" y="5" width="1" height="1" fill="#b0aca7"/><rect x="5" y="8" width="1" height="1" fill="#b0aca7"/><rect x="8" y="8" width="1" height="1" fill="#b0aca7"/><rect x="11" y="8" width="1" height="1" fill="#b0aca7"/><rect x="2" y="11" width="1" height="1" fill="#b0aca7"/><rect x="5" y="11" width="1" height="1" fill="#b0aca7"/><rect x="8" y="11" width="1" height="1" fill="#b0aca7"/><rect x="11" y="11" width="1" height="1" fill="#b0aca7"/></svg>
</body></html>
